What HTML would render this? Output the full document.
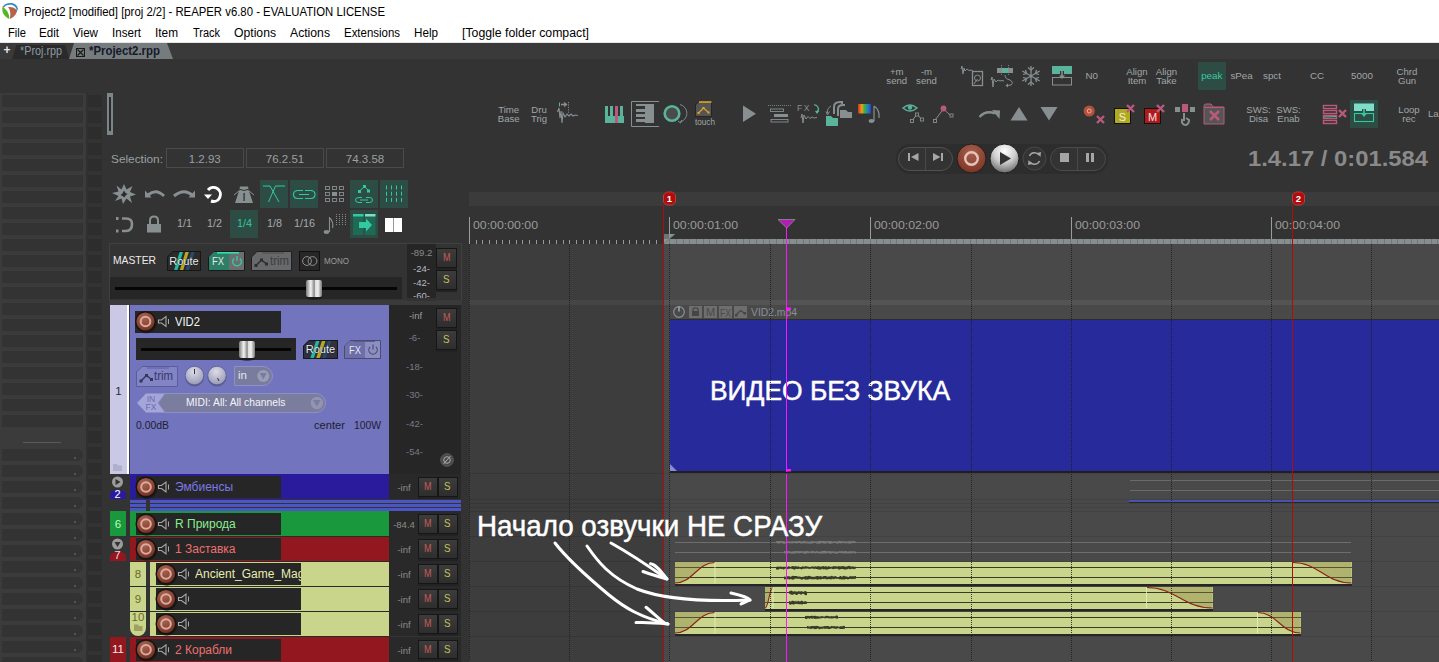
<!DOCTYPE html>
<html><head><meta charset="utf-8"><style>
html,body{margin:0;padding:0;}
body{width:1439px;height:662px;position:relative;overflow:hidden;background:#333333;font-family:"Liberation Sans", sans-serif;}
svg{position:absolute;overflow:visible;}
</style></head><body>
<div style="position:absolute;left:0px;top:0px;width:1439px;height:43px;background:#ffffff;"></div>
<svg style="left:0;top:0" width="20" height="20">
<path d="M2.4,7.6 C1.6,12.5 4.2,16.8 9.2,18.9 C9.6,14.8 7.5,10 3.2,7.2 Z" fill="#57b52c"/>
<path d="M8,7 C11.5,6.5 15,7.6 17.2,10.2 C16.6,14.2 13.6,17.6 9.8,18.9 C10.8,14.8 10.6,10 8,7 Z" fill="#b8624e"/>
<path d="M2.6,7 C4.5,3.2 11,1.8 15.5,4.5 C17.4,5.8 18,8 17.8,10.3 L16.6,10 C16.4,6.8 13.2,4.8 10,4.8 C6.8,4.8 4.8,6 3.9,7.6 Z" fill="#2a8fcf"/>
<path d="M2.4,6.9 L3.9,7.7 L4.6,6.6 L3.3,6 Z" fill="#c87a20"/>
</svg>
<div style="position:absolute;left:23.50px;top:5.54px;font-size:12px;line-height:12px;color:#000;font-weight:normal;white-space:nowrap;transform:scaleX(0.9458);transform-origin:0 0;">Project2 [modified] [proj 2/2] - REAPER v6.80 - EVALUATION LICENSE</div>
<div style="position:absolute;left:7.50px;top:26.64px;font-size:12px;line-height:12px;color:#000;font-weight:normal;white-space:nowrap;transform:scaleX(0.9309);transform-origin:0 0;">File</div>
<div style="position:absolute;left:39.00px;top:26.64px;font-size:12px;line-height:12px;color:#000;font-weight:normal;white-space:nowrap;transform:scaleX(0.9672);transform-origin:0 0;">Edit</div>
<div style="position:absolute;left:73.00px;top:26.64px;font-size:12px;line-height:12px;color:#000;font-weight:normal;white-space:nowrap;transform:scaleX(0.9693);transform-origin:0 0;">View</div>
<div style="position:absolute;left:112.00px;top:26.64px;font-size:12px;line-height:12px;color:#000;font-weight:normal;white-space:nowrap;transform:scaleX(0.9663);transform-origin:0 0;">Insert</div>
<div style="position:absolute;left:155.00px;top:26.64px;font-size:12px;line-height:12px;color:#000;font-weight:normal;white-space:nowrap;transform:scaleX(0.9855);transform-origin:0 0;">Item</div>
<div style="position:absolute;left:193.00px;top:26.64px;font-size:12px;line-height:12px;color:#000;font-weight:normal;white-space:nowrap;transform:scaleX(0.9136);transform-origin:0 0;">Track</div>
<div style="position:absolute;left:234.00px;top:26.64px;font-size:12px;line-height:12px;color:#000;font-weight:normal;white-space:nowrap;transform:scaleX(1.0156);transform-origin:0 0;">Options</div>
<div style="position:absolute;left:290.00px;top:26.64px;font-size:12px;line-height:12px;color:#000;font-weight:normal;white-space:nowrap;transform:scaleX(1.0165);transform-origin:0 0;">Actions</div>
<div style="position:absolute;left:344.00px;top:26.64px;font-size:12px;line-height:12px;color:#000;font-weight:normal;white-space:nowrap;transform:scaleX(0.9540);transform-origin:0 0;">Extensions</div>
<div style="position:absolute;left:414.00px;top:26.64px;font-size:12px;line-height:12px;color:#000;font-weight:normal;white-space:nowrap;transform:scaleX(0.9725);transform-origin:0 0;">Help</div>
<div style="position:absolute;left:462.00px;top:26.64px;font-size:12px;line-height:12px;color:#000;font-weight:normal;white-space:nowrap;transform:scaleX(1.0236);transform-origin:0 0;">[Toggle folder compact]</div>
<div style="position:absolute;left:0px;top:42px;width:1439px;height:1px;background:#e6e6e6;"></div>
<div style="position:absolute;left:0px;top:43px;width:1439px;height:16px;background:#3a3a3a;"></div>
<div style="position:absolute;left:3.50px;top:43.84px;font-size:12px;line-height:12px;color:#e8e8e8;font-weight:bold;white-space:nowrap;">+</div>
<svg style="left:0;top:43px" width="200" height="16"><polygon points="12,16 16.5,2 65,2 69.5,16" fill="#2a2a2a"/><polygon points="69,16 74,0 167,0 173,16" fill="#767c7e"/></svg>
<div style="position:absolute;left:19.50px;top:44.84px;font-size:12px;line-height:12px;color:#8c9aa6;font-weight:normal;white-space:nowrap;transform:scaleX(0.8996);transform-origin:0 0;">*Proj.rpp</div>
<div style="position:absolute;left:76px;top:48px;width:9px;height:9px;background:transparent;border:1px solid #1a1a1a;box-sizing:border-box;"></div>
<svg style="left:76px;top:48px" width="9" height="9"><path d="M1.5,1.5 L7.5,7.5 M7.5,1.5 L1.5,7.5" stroke="#1a1a1a" stroke-width="1.2"/></svg>
<div style="position:absolute;left:89.00px;top:45.14px;font-size:12px;line-height:12px;color:#15182a;font-weight:bold;white-space:nowrap;transform:scaleX(0.9506);transform-origin:0 0;">*Project2.rpp</div>
<div style="position:absolute;left:0px;top:93px;width:86px;height:569px;background:#3b3b3b;"></div>
<div style="position:absolute;left:2px;top:95px;width:81px;height:12px;background:#333333;"></div>
<div style="position:absolute;left:2px;top:111px;width:81px;height:12px;background:#333333;"></div>
<div style="position:absolute;left:2px;top:127px;width:81px;height:12px;background:#333333;"></div>
<div style="position:absolute;left:2px;top:143px;width:81px;height:12px;background:#333333;"></div>
<div style="position:absolute;left:2px;top:159px;width:81px;height:12px;background:#333333;"></div>
<div style="position:absolute;left:2px;top:175px;width:81px;height:12px;background:#333333;"></div>
<div style="position:absolute;left:2px;top:191px;width:81px;height:12px;background:#333333;"></div>
<div style="position:absolute;left:2px;top:207px;width:81px;height:12px;background:#333333;"></div>
<div style="position:absolute;left:2px;top:223px;width:81px;height:12px;background:#333333;"></div>
<div style="position:absolute;left:2px;top:239px;width:81px;height:12px;background:#333333;"></div>
<div style="position:absolute;left:2px;top:255px;width:81px;height:12px;background:#333333;"></div>
<div style="position:absolute;left:2px;top:271px;width:81px;height:12px;background:#333333;"></div>
<div style="position:absolute;left:2px;top:287px;width:81px;height:12px;background:#333333;"></div>
<div style="position:absolute;left:2px;top:303px;width:81px;height:12px;background:#333333;"></div>
<div style="position:absolute;left:2px;top:319px;width:81px;height:12px;background:#333333;"></div>
<div style="position:absolute;left:2px;top:335px;width:81px;height:12px;background:#333333;"></div>
<div style="position:absolute;left:2px;top:351px;width:81px;height:12px;background:#333333;"></div>
<div style="position:absolute;left:2px;top:367px;width:81px;height:12px;background:#333333;"></div>
<div style="position:absolute;left:2px;top:383px;width:81px;height:12px;background:#333333;"></div>
<div style="position:absolute;left:2px;top:399px;width:81px;height:12px;background:#333333;"></div>
<div style="position:absolute;left:2px;top:415px;width:81px;height:12px;background:#333333;"></div>
<div style="position:absolute;left:23px;top:442px;width:38px;height:1px;background:#5a5a5a;"></div>
<div style="position:absolute;left:2px;top:449px;width:81px;height:12px;background:#333333;border-radius:0 7px 7px 0;"></div>
<div style="position:absolute;left:74px;top:457px;width:2px;height:2px;background:#555;"></div>
<div style="position:absolute;left:2px;top:465px;width:81px;height:12px;background:#333333;border-radius:0 7px 7px 0;"></div>
<div style="position:absolute;left:74px;top:473px;width:2px;height:2px;background:#555;"></div>
<div style="position:absolute;left:2px;top:481px;width:81px;height:12px;background:#333333;border-radius:0 7px 7px 0;"></div>
<div style="position:absolute;left:74px;top:489px;width:2px;height:2px;background:#555;"></div>
<div style="position:absolute;left:2px;top:497px;width:81px;height:12px;background:#333333;border-radius:0 7px 7px 0;"></div>
<div style="position:absolute;left:74px;top:505px;width:2px;height:2px;background:#555;"></div>
<div style="position:absolute;left:2px;top:513px;width:81px;height:12px;background:#333333;border-radius:0 7px 7px 0;"></div>
<div style="position:absolute;left:74px;top:521px;width:2px;height:2px;background:#555;"></div>
<div style="position:absolute;left:2px;top:529px;width:81px;height:12px;background:#333333;border-radius:0 7px 7px 0;"></div>
<div style="position:absolute;left:74px;top:537px;width:2px;height:2px;background:#555;"></div>
<div style="position:absolute;left:2px;top:545px;width:81px;height:12px;background:#333333;border-radius:0 7px 7px 0;"></div>
<div style="position:absolute;left:74px;top:553px;width:2px;height:2px;background:#555;"></div>
<div style="position:absolute;left:2px;top:561px;width:81px;height:12px;background:#333333;border-radius:0 7px 7px 0;"></div>
<div style="position:absolute;left:74px;top:569px;width:2px;height:2px;background:#555;"></div>
<div style="position:absolute;left:2px;top:577px;width:81px;height:12px;background:#333333;border-radius:0 7px 7px 0;"></div>
<div style="position:absolute;left:74px;top:585px;width:2px;height:2px;background:#555;"></div>
<div style="position:absolute;left:2px;top:593px;width:81px;height:12px;background:#333333;border-radius:0 7px 7px 0;"></div>
<div style="position:absolute;left:74px;top:601px;width:2px;height:2px;background:#555;"></div>
<div style="position:absolute;left:2px;top:609px;width:81px;height:12px;background:#333333;border-radius:0 7px 7px 0;"></div>
<div style="position:absolute;left:74px;top:617px;width:2px;height:2px;background:#555;"></div>
<div style="position:absolute;left:2px;top:625px;width:81px;height:12px;background:#333333;border-radius:0 7px 7px 0;"></div>
<div style="position:absolute;left:74px;top:633px;width:2px;height:2px;background:#555;"></div>
<div style="position:absolute;left:2px;top:641px;width:81px;height:12px;background:#333333;border-radius:0 7px 7px 0;"></div>
<div style="position:absolute;left:74px;top:649px;width:2px;height:2px;background:#555;"></div>
<div style="position:absolute;left:2px;top:657px;width:81px;height:12px;background:#333333;border-radius:0 7px 7px 0;"></div>
<div style="position:absolute;left:74px;top:665px;width:2px;height:2px;background:#555;"></div>
<div style="position:absolute;left:86px;top:93px;width:2px;height:569px;background:#303030;"></div>
<div style="position:absolute;left:88px;top:95px;width:14px;height:12px;background:#2d2d2d;"></div>
<div style="position:absolute;left:88px;top:111px;width:14px;height:12px;background:#2d2d2d;"></div>
<div style="position:absolute;left:88px;top:127px;width:14px;height:12px;background:#2d2d2d;"></div>
<div style="position:absolute;left:88px;top:143px;width:14px;height:12px;background:#2d2d2d;"></div>
<div style="position:absolute;left:88px;top:159px;width:14px;height:12px;background:#2d2d2d;"></div>
<div style="position:absolute;left:88px;top:175px;width:14px;height:12px;background:#2d2d2d;"></div>
<div style="position:absolute;left:88px;top:191px;width:14px;height:12px;background:#2d2d2d;"></div>
<div style="position:absolute;left:88px;top:207px;width:14px;height:12px;background:#2d2d2d;"></div>
<div style="position:absolute;left:88px;top:223px;width:14px;height:12px;background:#2d2d2d;"></div>
<div style="position:absolute;left:88px;top:239px;width:14px;height:12px;background:#2d2d2d;"></div>
<div style="position:absolute;left:88px;top:255px;width:14px;height:12px;background:#2d2d2d;"></div>
<div style="position:absolute;left:88px;top:271px;width:14px;height:12px;background:#2d2d2d;"></div>
<div style="position:absolute;left:88px;top:287px;width:14px;height:12px;background:#2d2d2d;"></div>
<div style="position:absolute;left:88px;top:303px;width:14px;height:12px;background:#2d2d2d;"></div>
<div style="position:absolute;left:88px;top:319px;width:14px;height:12px;background:#2d2d2d;"></div>
<div style="position:absolute;left:88px;top:335px;width:14px;height:12px;background:#2d2d2d;"></div>
<div style="position:absolute;left:88px;top:351px;width:14px;height:12px;background:#2d2d2d;"></div>
<div style="position:absolute;left:88px;top:367px;width:14px;height:12px;background:#2d2d2d;"></div>
<div style="position:absolute;left:88px;top:383px;width:14px;height:12px;background:#2d2d2d;"></div>
<div style="position:absolute;left:88px;top:399px;width:14px;height:12px;background:#2d2d2d;"></div>
<div style="position:absolute;left:88px;top:415px;width:14px;height:12px;background:#2d2d2d;"></div>
<div style="position:absolute;left:88px;top:431px;width:14px;height:12px;background:#2d2d2d;"></div>
<div style="position:absolute;left:88px;top:447px;width:14px;height:12px;background:#2d2d2d;"></div>
<div style="position:absolute;left:88px;top:463px;width:14px;height:12px;background:#2d2d2d;"></div>
<div style="position:absolute;left:88px;top:479px;width:14px;height:12px;background:#2d2d2d;"></div>
<div style="position:absolute;left:88px;top:495px;width:14px;height:12px;background:#2d2d2d;"></div>
<div style="position:absolute;left:88px;top:511px;width:14px;height:12px;background:#2d2d2d;"></div>
<div style="position:absolute;left:88px;top:527px;width:14px;height:12px;background:#2d2d2d;"></div>
<div style="position:absolute;left:88px;top:543px;width:14px;height:12px;background:#2d2d2d;"></div>
<div style="position:absolute;left:88px;top:559px;width:14px;height:12px;background:#2d2d2d;"></div>
<div style="position:absolute;left:88px;top:575px;width:14px;height:12px;background:#2d2d2d;"></div>
<div style="position:absolute;left:88px;top:591px;width:14px;height:12px;background:#2d2d2d;"></div>
<div style="position:absolute;left:88px;top:607px;width:14px;height:12px;background:#2d2d2d;"></div>
<div style="position:absolute;left:88px;top:623px;width:14px;height:12px;background:#2d2d2d;"></div>
<div style="position:absolute;left:88px;top:639px;width:14px;height:12px;background:#2d2d2d;"></div>
<div style="position:absolute;left:88px;top:655px;width:14px;height:12px;background:#2d2d2d;"></div>
<div style="position:absolute;left:107px;top:93px;width:6px;height:42px;background:#7c8587;"></div>
<div style="position:absolute;left:109px;top:97px;width:2px;height:34px;background:#2a2a2a;"></div>
<div style="position:absolute;left:889.95px;top:67.37px;font-size:9.6px;line-height:9.6px;color:#a0a6a8;font-weight:normal;white-space:nowrap;">+m</div>
<div style="position:absolute;left:886.35px;top:75.87px;font-size:9.6px;line-height:9.6px;color:#a0a6a8;font-weight:normal;white-space:nowrap;">send</div>
<div style="position:absolute;left:920.91px;top:67.37px;font-size:9.6px;line-height:9.6px;color:#a0a6a8;font-weight:normal;white-space:nowrap;">-m</div>
<div style="position:absolute;left:916.10px;top:75.87px;font-size:9.6px;line-height:9.6px;color:#a0a6a8;font-weight:normal;white-space:nowrap;">send</div>
<div style="position:absolute;left:1085.44px;top:71.20px;font-size:9.8px;line-height:9.8px;color:#a0a6a8;font-weight:normal;white-space:nowrap;">N0</div>
<div style="position:absolute;left:1126.33px;top:67.37px;font-size:9.6px;line-height:9.6px;color:#a0a6a8;font-weight:normal;white-space:nowrap;">Align</div>
<div style="position:absolute;left:1127.67px;top:75.87px;font-size:9.6px;line-height:9.6px;color:#a0a6a8;font-weight:normal;white-space:nowrap;">Item</div>
<div style="position:absolute;left:1155.83px;top:67.37px;font-size:9.6px;line-height:9.6px;color:#a0a6a8;font-weight:normal;white-space:nowrap;">Align</div>
<div style="position:absolute;left:1156.37px;top:75.87px;font-size:9.6px;line-height:9.6px;color:#a0a6a8;font-weight:normal;white-space:nowrap;">Take</div>
<div style="position:absolute;left:1198px;top:62px;width:28px;height:28px;background:#2d4c44;"></div>
<div style="position:absolute;left:1201.18px;top:71.20px;font-size:9.8px;line-height:9.8px;color:#3cc8a0;font-weight:normal;white-space:nowrap;">peak</div>
<div style="position:absolute;left:1230.43px;top:71.20px;font-size:9.8px;line-height:9.8px;color:#a0a6a8;font-weight:normal;white-space:nowrap;">sPea</div>
<div style="position:absolute;left:1263.02px;top:71.20px;font-size:9.8px;line-height:9.8px;color:#a0a6a8;font-weight:normal;white-space:nowrap;">spct</div>
<div style="position:absolute;left:1309.93px;top:71.20px;font-size:9.8px;line-height:9.8px;color:#a0a6a8;font-weight:normal;white-space:nowrap;">CC</div>
<div style="position:absolute;left:1351.10px;top:71.20px;font-size:9.8px;line-height:9.8px;color:#a0a6a8;font-weight:normal;white-space:nowrap;">5000</div>
<div style="position:absolute;left:1396.60px;top:67.37px;font-size:9.6px;line-height:9.6px;color:#a0a6a8;font-weight:normal;white-space:nowrap;">Chrd</div>
<div style="position:absolute;left:1397.93px;top:75.87px;font-size:9.6px;line-height:9.6px;color:#a0a6a8;font-weight:normal;white-space:nowrap;">Gun</div>
<div style="position:absolute;left:498.22px;top:105.37px;font-size:9.6px;line-height:9.6px;color:#a0a6a8;font-weight:normal;white-space:nowrap;">Time</div>
<div style="position:absolute;left:497.77px;top:113.87px;font-size:9.6px;line-height:9.6px;color:#a0a6a8;font-weight:normal;white-space:nowrap;">Base</div>
<div style="position:absolute;left:531.27px;top:105.37px;font-size:9.6px;line-height:9.6px;color:#a0a6a8;font-weight:normal;white-space:nowrap;">Dru</div>
<div style="position:absolute;left:530.92px;top:113.87px;font-size:9.6px;line-height:9.6px;color:#a0a6a8;font-weight:normal;white-space:nowrap;">Trig</div>
<div style="position:absolute;left:1246.24px;top:105.37px;font-size:9.6px;line-height:9.6px;color:#a0a6a8;font-weight:normal;white-space:nowrap;">SWS:</div>
<div style="position:absolute;left:1248.90px;top:113.87px;font-size:9.6px;line-height:9.6px;color:#a0a6a8;font-weight:normal;white-space:nowrap;">Disa</div>
<div style="position:absolute;left:1276.24px;top:105.37px;font-size:9.6px;line-height:9.6px;color:#a0a6a8;font-weight:normal;white-space:nowrap;">SWS:</div>
<div style="position:absolute;left:1277.30px;top:113.87px;font-size:9.6px;line-height:9.6px;color:#a0a6a8;font-weight:normal;white-space:nowrap;">Enab</div>
<div style="position:absolute;left:1398.33px;top:105.37px;font-size:9.6px;line-height:9.6px;color:#a0a6a8;font-weight:normal;white-space:nowrap;">Loop</div>
<div style="position:absolute;left:1402.34px;top:113.87px;font-size:9.6px;line-height:9.6px;color:#a0a6a8;font-weight:normal;white-space:nowrap;">rec</div>
<div style="position:absolute;left:1428.00px;top:109.37px;font-size:9.6px;line-height:9.6px;color:#a0a6a8;font-weight:normal;white-space:nowrap;">La</div>
<div style="position:absolute;left:1350px;top:100px;width:28px;height:28px;background:#2d4c44;"></div>
<div style="position:absolute;left:695.00px;top:117.37px;font-size:9.6px;line-height:9.6px;color:#a0a6a8;font-weight:normal;white-space:nowrap;transform:scaleX(0.8522);transform-origin:0 0;">touch</div>
<svg style="left:0;top:0" width="1439" height="140">
<!-- waveform trim icon -->
<path d="M557.5,112 L559,108 L560,118 L561,111 L562,123 L563,113 L565,117 L567,114 L569,116 L571,114 L573,116 L575,115 L578,115.5" stroke="#878f91" stroke-width="1.1" fill="none"/>
<rect x="559" y="102.5" width="1" height="4" fill="#5ab39b"/>
<path d="M561,104.5 L566,104.5 M564,102.5 L566.5,104.5 L564,106.5" stroke="#878f91" stroke-width="1.3" fill="none"/>
<path d="M568.5,102 L568.5,114" stroke="#878f91" stroke-width="0.9" stroke-dasharray="1.2,1.2"/>
<!-- piano -->
<rect x="605" y="106" width="3" height="17" fill="#5ab39b"/><rect x="610" y="106" width="3" height="17" fill="#5ab39b"/>
<rect x="615" y="106" width="3" height="17" fill="#b95a7c"/><rect x="620" y="106" width="3" height="17" fill="#5ab39b"/>
<rect x="605" y="116" width="5" height="7" fill="#5ab39b"/><rect x="613" y="116" width="2" height="7" fill="#5ab39b"/><rect x="618" y="116" width="6" height="7" fill="#5ab39b"/>
<!-- piano roll -->
<path d="M659,101.5 L631.5,101.5 L631.5,126.5 L659,126.5" stroke="#878f91" stroke-width="1" fill="none"/>
<rect x="636" y="104" width="18" height="2" fill="#878f91"/><rect x="646" y="104" width="8" height="3" fill="#878f91"/>
<rect x="636" y="109" width="18" height="3" fill="#878f91"/><rect x="636" y="114" width="18" height="3" fill="#878f91"/><rect x="636" y="119" width="18" height="3" fill="#878f91"/>
<rect x="645" y="106" width="9" height="17" fill="#878f91"/>
<rect x="636" y="107" width="9" height="1.5" fill="#333"/><rect x="636" y="112.5" width="9" height="1.5" fill="#333"/><rect x="636" y="117.5" width="9" height="1.5" fill="#333"/>
<!-- loop -->
<circle cx="672" cy="113.5" r="7.3" stroke="#5ab39b" stroke-width="2.6" fill="#4a4c4c"/>
<path d="M680,104.5 A9,9 0 0 1 680,122" stroke="#878f91" stroke-width="0.9" fill="none"/><path d="M678,121 L680.5,123 L682,120" stroke="#878f91" stroke-width="1" fill="none"/>
<!-- touch -->
<path d="M699,101.5 L711.5,101.5 L711.5,116.5 L695.5,116.5 L695.5,105 Z" fill="#555" stroke="#1e1e1e" stroke-width="0.8"/>
<path d="M699,102 L711.5,102" stroke="#e2a520" stroke-width="1.6"/>
<path d="M698.5,113 L703.5,108 L708.5,112.5" stroke="#e2a520" stroke-width="1.1" fill="none"/>
<rect x="697.5" y="112" width="2" height="2" fill="#e2a520"/><rect x="702.5" y="107" width="2" height="2" fill="#e2a520"/><rect x="707.5" y="111.5" width="2" height="2" fill="#e2a520"/>
<!-- play -->
<path d="M743,105.5 L756,113.7 L743,122 Z" fill="#878f91"/>
<!-- align lines -->
<path d="M768,105.5 L791,105.5" stroke="#878f91" stroke-width="0.8" stroke-dasharray="1,1"/>
<rect x="770.5" y="109" width="13" height="2.5" stroke="#878f91" stroke-width="0.9" fill="none"/>
<rect x="774" y="114" width="14" height="3" fill="#878f91"/>
<rect x="771" y="119.5" width="17" height="2.5" stroke="#878f91" stroke-width="0.9" fill="none"/>
<!-- FX wave -->
<text x="797" y="111" font-size="8.5" fill="#878f91" font-family="Liberation Sans" letter-spacing="1.5">FX</text>
<path d="M814,105 A4,4 0 0 1 817,112" stroke="#5ab39b" stroke-width="1.2" fill="none"/><path d="M815,111 L817,114 L819.5,110.5 Z" fill="#5ab39b"/>
<path d="M801,118 L802,114 L803,123 L804,115 L806,119 L808,116.5 L810,118.5 L812,117 L814,118 L817,117.5" stroke="#878f91" stroke-width="1" fill="none"/>
<!-- folders -->
<path d="M834,114 L834,107 Q834,102 840,102 L842,102 L842,104" stroke="#878f91" stroke-width="2" fill="none"/>
<path d="M838,116 L838,109 Q838,105 843,105 L845,105" stroke="#878f91" stroke-width="2" fill="none"/>
<path d="M840,118 L840,110 L846,110 L848,112 L852,112 L852,118 Z" fill="#878f91"/>
<path d="M831,106 Q827,108 827.5,113" stroke="#878f91" stroke-width="1" fill="none"/><path d="M826,111.5 L827.5,115 L829.5,111.5" stroke="#878f91" stroke-width="1" fill="none"/>
<path d="M826,126 L826,116 L831,116 L833,118 L838,118 L838,126 Z" fill="#5ab39b"/>
<!-- color bar + note -->
<defs><linearGradient id="rb" x1="0" x2="1" y1="0" y2="0"><stop offset="0" stop-color="#d03020"/><stop offset="0.3" stop-color="#e8a020"/><stop offset="0.5" stop-color="#40b030"/><stop offset="0.75" stop-color="#2080d0"/><stop offset="1" stop-color="#3040b0"/></linearGradient></defs>
<rect x="858" y="104" width="13" height="9.5" fill="url(#rb)"/>
<path d="M874,106 L874,121 M874,106 Q880,110 879,118" stroke="#878f91" stroke-width="1.2" fill="none"/><ellipse cx="871.5" cy="121" rx="2.8" ry="1.9" fill="#878f91"/>
<!-- eye nodes -->
<path d="M903,108 Q910,102 917,108 Q910,114 903,108 Z" stroke="#5ab39b" stroke-width="1.4" fill="none"/><circle cx="910" cy="107.5" r="2.2" fill="#5ab39b"/>
<path d="M912,121 L917,114 L922,120" stroke="#878f91" stroke-width="1" fill="none"/>
<rect x="910.5" y="119.5" width="3" height="3" stroke="#878f91" stroke-width="0.9" fill="#333"/><rect x="915.5" y="113" width="3" height="3" stroke="#878f91" stroke-width="0.9" fill="#333"/><rect x="920.5" y="118" width="3" height="3" stroke="#878f91" stroke-width="0.9" fill="#333"/>
<!-- envelope pink -->
<path d="M935,120 L943.5,109 L950,115" stroke="#878f91" stroke-width="1" fill="none"/>
<circle cx="943.5" cy="108.5" r="2.9" fill="#b95a7c"/>
<rect x="933.5" y="119.5" width="3" height="3" stroke="#878f91" stroke-width="0.9" fill="#333"/><rect x="950" y="114" width="3" height="3" stroke="#878f91" stroke-width="0.9" fill="#333"/>
<!-- row1: disk -->
<path d="M961,69 L962,66 L963,74 L964,68 L965,71 L967,69 L969,70.5 L971,70 L973,71" stroke="#878f91" stroke-width="1" fill="none"/>
<rect x="972.5" y="71.5" width="10" height="14" fill="none" stroke="#878f91" stroke-width="1.3"/>
<circle cx="977.5" cy="78" r="3" stroke="#878f91" stroke-width="1" fill="none"/><path d="M974,84 L977.5,79" stroke="#878f91" stroke-width="1"/>
<!-- selection wave -->
<rect x="997" y="68" width="16" height="5" fill="#878f91"/><rect x="1002" y="68" width="6" height="5" fill="#5ab39b"/>
<path d="M1001.5,65 L1001.5,76 M1008.5,65 L1008.5,76" stroke="#878f91" stroke-width="0.8" stroke-dasharray="1.2,1"/>
<path d="M991,80 L992,77 L993,87 L994,79 L996,82 L998,80 L1000,81 L1002,80.5 L1004,81" stroke="#878f91" stroke-width="1" fill="none"/>
<path d="M1005,75 Q1005,79 1010,80 Q1014,82 1011,85 L1007,85.5" stroke="#878f91" stroke-width="1" fill="none"/><path d="M1008,83.5 L1005.5,85.5 L1008,87.5 Z" fill="#878f91"/>
<!-- snowflake -->
<g stroke="#878f91" stroke-width="1.3" fill="none">
<path d="M1031,66 L1031,86 M1022.3,71 L1039.7,81 M1022.3,81 L1039.7,71"/>
<path d="M1028,67.5 L1031,70 L1034,67.5 M1028,84.5 L1031,82 L1034,84.5 M1023,74.5 L1026.5,73.5 L1025.5,70 M1039,74.5 L1035.5,73.5 L1036.5,70 M1023,77.5 L1026.5,78.5 L1025.5,82 M1039,77.5 L1035.5,78.5 L1036.5,82"/>
</g>
<!-- import -->
<path d="M1052,66 L1072,66 L1072,74 L1064,74 L1064,71 L1060,71 L1060,74 L1052,74 Z" fill="#5ab39b"/>
<rect x="1052.5" y="77.5" width="19" height="7.5" fill="none" stroke="#878f91" stroke-width="1"/>
<path d="M1062,71 L1062,77" stroke="#878f91" stroke-width="1.6"/><path d="M1059,75.5 L1062,79 L1065,75.5 Z" fill="#878f91"/>
<!-- redo -->
<path d="M979.5,117 Q986,110 995,113.5" stroke="#878f91" stroke-width="2.4" fill="none"/><path d="M992,110 L1000,110.5 L999.5,119 Z" fill="#878f91"/>
<!-- up/down -->
<path d="M1010.5,120.5 L1019,107 L1027.5,120.5 Z" fill="#878f91"/>
<path d="M1040.5,107 L1057.5,107 L1049,120.5 Z" fill="#878f91"/>
<!-- rec x -->
<circle cx="1089.2" cy="111" r="5.6" fill="#b5503a"/><circle cx="1089.2" cy="111" r="2" stroke="#e8c0b0" stroke-width="0.9" fill="none"/>
<path d="M1097,116 L1104,123 M1104,116 L1097,123" stroke="#b95a7c" stroke-width="2.4"/>
<!-- S x -->
<rect x="1114.5" y="108.5" width="16" height="15" fill="#b3aa1e" stroke="#111" stroke-width="1"/>
<text x="1122.5" y="120.5" font-size="11" fill="#f0f0e0" font-family="Liberation Sans" text-anchor="middle">S</text>
<path d="M1127,105 L1134,112 M1134,105 L1127,112" stroke="#b95a7c" stroke-width="2.4"/>
<!-- M x -->
<rect x="1144.5" y="108.5" width="16" height="15" fill="#b3191a" stroke="#111" stroke-width="1"/>
<text x="1152.5" y="120.5" font-size="11" fill="#f0e0e0" font-family="Liberation Sans" text-anchor="middle">M</text>
<path d="M1157,105 L1164,112 M1164,105 L1157,112" stroke="#b95a7c" stroke-width="2.4"/>
<!-- hand -->
<rect x="1175" y="107" width="5" height="5" fill="#878f91"/><rect x="1182" y="104" width="6" height="8" fill="#b95a7c"/><rect x="1190" y="107" width="5" height="5" fill="#878f91"/>
<path d="M1184,113 L1184,121 M1182,119 Q1181,125 1186,125 Q1189,124 1189,120 L1186,118" stroke="#878f91" stroke-width="2" fill="none"/>
<!-- folder x -->
<path d="M1204,124 L1204,106 Q1204,104 1206,104 L1211,104 L1213,107 L1224,107 L1224,124 Z" fill="#555" stroke="#b95a7c" stroke-width="1"/>
<path d="M1204.5,107.5 L1223.5,107.5" stroke="#b95a7c" stroke-width="1.2"/>
<path d="M1210,111 L1219,120 M1219,111 L1210,120" stroke="#b95a7c" stroke-width="2.6"/>
<!-- pink lines x -->
<g fill="none" stroke="#b95a7c" stroke-width="1.4"><rect x="1323.5" y="105.5" width="13" height="3"/><rect x="1323.5" y="110.5" width="13" height="3"/><rect x="1323.5" y="115.5" width="13" height="3"/><rect x="1323.5" y="120.5" width="13" height="3"/></g>
<path d="M1324,117 L1336,116.5" stroke="#5ab39b" stroke-width="1"/>
<path d="M1339,110 L1346,117 M1346,110 L1339,117" stroke="#b95a7c" stroke-width="2.4"/>
<!-- import highlighted -->
<path d="M1354,103.5 L1374,103.5 L1374,111 L1366,111 L1366,109 L1362,109 L1362,111 L1354,111 Z" fill="#7fdcc8"/>
<rect x="1354.5" y="113.5" width="19" height="8" fill="none" stroke="#33c9a0" stroke-width="1.1"/>
<path d="M1364,109 L1364,115" stroke="#33c9a0" stroke-width="1.6"/><path d="M1361,113.5 L1364,117 L1367,113.5 Z" fill="#33c9a0"/>
</svg>
<div style="position:absolute;left:111.00px;top:154.27px;font-size:11.5px;line-height:11.5px;color:#9aa0a4;font-weight:normal;white-space:nowrap;transform:scaleX(1.0296);transform-origin:0 0;">Selection:</div>
<div style="position:absolute;left:166px;top:148px;width:77.5px;height:19.5px;background:transparent;border:1px solid #4b4b4b;box-sizing:border-box;"></div>
<div style="position:absolute;left:188.76px;top:154.27px;font-size:11.5px;line-height:11.5px;color:#9aa0a4;font-weight:normal;white-space:nowrap;">1.2.93</div>
<div style="position:absolute;left:246px;top:148px;width:78px;height:19.5px;background:transparent;border:1px solid #4b4b4b;box-sizing:border-box;"></div>
<div style="position:absolute;left:265.82px;top:154.27px;font-size:11.5px;line-height:11.5px;color:#9aa0a4;font-weight:normal;white-space:nowrap;">76.2.51</div>
<div style="position:absolute;left:326px;top:148px;width:78px;height:19.5px;background:transparent;border:1px solid #4b4b4b;box-sizing:border-box;"></div>
<div style="position:absolute;left:345.82px;top:154.27px;font-size:11.5px;line-height:11.5px;color:#9aa0a4;font-weight:normal;white-space:nowrap;">74.3.58</div>
<div style="position:absolute;left:260px;top:180px;width:28px;height:28px;background:#2d4c44;"></div>
<div style="position:absolute;left:290px;top:180px;width:28px;height:28px;background:#2d4c44;"></div>
<div style="position:absolute;left:350px;top:180px;width:28px;height:28px;background:#2d4c44;"></div>
<div style="position:absolute;left:380px;top:180px;width:28px;height:28px;background:#2d4c44;"></div>
<div style="position:absolute;left:230px;top:210px;width:28px;height:28px;background:#2d4c44;"></div>
<div style="position:absolute;left:350px;top:210px;width:28px;height:28px;background:#2d4c44;"></div>
<div style="position:absolute;left:176.70px;top:218.41px;font-size:10.5px;line-height:10.5px;color:#a6abae;font-weight:normal;white-space:nowrap;transform:scaleX(1.0276);transform-origin:0 0;">1/1</div>
<div style="position:absolute;left:206.80px;top:218.41px;font-size:10.5px;line-height:10.5px;color:#a6abae;font-weight:normal;white-space:nowrap;transform:scaleX(1.0276);transform-origin:0 0;">1/2</div>
<div style="position:absolute;left:236.80px;top:218.41px;font-size:10.5px;line-height:10.5px;color:#33c9a0;font-weight:normal;white-space:nowrap;transform:scaleX(1.0276);transform-origin:0 0;">1/4</div>
<div style="position:absolute;left:266.80px;top:218.41px;font-size:10.5px;line-height:10.5px;color:#a6abae;font-weight:normal;white-space:nowrap;transform:scaleX(1.0276);transform-origin:0 0;">1/8</div>
<div style="position:absolute;left:293.80px;top:218.41px;font-size:10.5px;line-height:10.5px;color:#a6abae;font-weight:normal;white-space:nowrap;transform:scaleX(1.0276);transform-origin:0 0;">1/16</div>
<svg style="left:0;top:0" width="440" height="245">
<!-- star -->
<path d="M124,184 L126.5,189.5 L132.5,186 L130,192 L136,194.5 L130,196.5 L132,203 L126.5,198.5 L123,204 L121.5,198.5 L115,201 L118.5,196 L112,193 L118.5,191.5 L116.5,185.5 L121.5,189.5 Z" fill="#878f91"/>
<path d="M124,190.5 L125.5,193 L127.5,194 L125.5,195.5 L124.5,197.5 L122.5,196 L120.5,195 L122.5,193.5 Z" fill="#2a2a2a"/>
<!-- undo -->
<path d="M145,197.5 L145,190.5 L151.5,197.5 Z" fill="#878f91"/>
<path d="M148,195 Q156,188 164,196" stroke="#878f91" stroke-width="3" fill="none"/>
<!-- redo -->
<path d="M195,197.5 L195,190.5 L188.5,197.5 Z" fill="#878f91"/>
<path d="M192,195 Q184,188 174,196" stroke="#878f91" stroke-width="3" fill="none"/>
<!-- refresh -->
<path d="M208,190 A7,7 0 1 1 211,201" stroke="#ffffff" stroke-width="3" fill="none"/>
<path d="M204,194.5 L212,194.5 L208,199 Z" fill="#ffffff"/>
<!-- road -->
<path d="M234,195 Q244,184 254,195" stroke="#878f91" stroke-width="1" fill="none"/>
<path d="M240,186.5 L248,186.5 L248.5,189 L239.5,189 Z" fill="#878f91"/>
<path d="M239,191 L249,191 L253,203 L235,203 Z" fill="#878f91"/>
<rect x="243.5" y="193" width="1.2" height="8" fill="#2a2a2a"/>
<!-- crossfade -->
<path d="M263,186 L270,186 L279,202 M285,186 L275.5,186 L268.5,202" stroke="#33c9a0" stroke-width="1" fill="none"/>
<!-- link -->
<path d="M303,190.5 L298,190.5 Q293.5,190.5 293.5,194.5 Q293.5,198.5 298,198.5 L303,198.5 M305,190.5 L310.5,190.5 Q315,190.5 315,194.5 Q315,198.5 310.5,198.5 L305,198.5 M299,194.5 L309,194.5" stroke="#33c9a0" stroke-width="1.1" fill="none"/>
<!-- grid -->
<g stroke="#878f91" stroke-width="0.9" fill="none">
<rect x="325.5" y="186.5" width="4" height="3"/><rect x="332.5" y="186.5" width="4" height="3"/><rect x="339.5" y="186.5" width="4" height="3"/>
<rect x="325.5" y="192.5" width="4" height="3"/><rect x="339.5" y="192.5" width="4" height="3"/>
<rect x="325.5" y="198.5" width="4" height="3"/><rect x="332.5" y="198.5" width="4" height="3"/><rect x="339.5" y="198.5" width="4" height="3"/>
</g><rect x="332" y="192" width="5" height="4" fill="#878f91"/>
<!-- link env -->
<path d="M359.5,191 L364.5,186.5 L368.5,190.5" stroke="#33c9a0" stroke-width="1" fill="none"/>
<rect x="358" y="190" width="3" height="3" fill="#33c9a0"/><rect x="363" y="185" width="3" height="3" fill="#33c9a0"/><rect x="367" y="189.5" width="3" height="3" fill="#33c9a0"/>
<path d="M362,197.5 L359,197.5 Q355.5,197.5 355.5,200 Q355.5,202.5 359,202.5 L362,202.5 M366,197.5 L369.5,197.5 Q372.5,197.5 372.5,200 Q372.5,202.5 369.5,202.5 L366,202.5 M360,200 L368,200" stroke="#33c9a0" stroke-width="1" fill="none"/>
<!-- grid lines -->
<path d="M386.5,185.5 L386.5,202 M391.5,185.5 L391.5,202 M396.5,185.5 L396.5,202 M401.5,185.5 L401.5,202" stroke="#33c9a0" stroke-width="1" stroke-dasharray="4,2.2"/>
<!-- magnet -->
<path d="M122,218.5 L126,218.5 Q132,218.5 132,224 Q132,231 126,231 L122,231" stroke="#878f91" stroke-width="2.6" fill="none"/>
<rect x="116" y="217" width="2.5" height="3" fill="#878f91"/><rect x="116" y="229.5" width="2.5" height="3" fill="#878f91"/>
<!-- lock -->
<path d="M150,224 L150,220.5 Q150,216.5 154,216.5 Q158,216.5 158,220.5 L158,224" stroke="#878f91" stroke-width="2" fill="none"/>
<rect x="147" y="224" width="14" height="8.5" fill="#878f91"/>
<!-- note -->
<path d="M329.5,217 L329.5,232 M329.5,217.5 Q334,222 332.5,228" stroke="#878f91" stroke-width="1.1" fill="none"/>
<ellipse cx="326.5" cy="232" rx="2.8" ry="1.9" fill="#878f91"/>
<path d="M336.5,214 L336.5,225 M339.5,214 L339.5,225 M342.5,214 L342.5,225 M345.5,214 L345.5,225" stroke="#9aa0a2" stroke-width="0.8" stroke-dasharray="1,1"/>
<!-- arrow box -->
<rect x="353" y="214" width="10.5" height="21" fill="#1f6a55"/><rect x="365" y="214" width="10.5" height="21" fill="#1f6a55"/>
<rect x="353" y="214" width="10.5" height="2.5" fill="#33c9a0"/><rect x="365" y="214" width="10.5" height="2.5" fill="#7fdcc8"/>
<path d="M359,222 L366,222 L366,218.5 L372,225 L366,231.5 L366,228 L359,228 Z" fill="#33c9a0"/>
<!-- white squares -->
<rect x="385" y="218" width="8" height="14" fill="#ffffff"/><rect x="393.5" y="218" width="8.5" height="14" fill="#ffffff"/>
</svg>
<svg style="left:0;top:0" width="1439" height="185">
<defs>
<radialGradient id="recg" cx="0.5" cy="0.3" r="0.7"><stop offset="0" stop-color="#a6604e"/><stop offset="1" stop-color="#7e3424"/></radialGradient>
<radialGradient id="playg" cx="0.5" cy="0.25" r="0.75"><stop offset="0" stop-color="#ffffff"/><stop offset="0.5" stop-color="#cfcfcf"/><stop offset="1" stop-color="#6a6a6a"/></radialGradient>
</defs>
<rect x="896" y="144" width="212" height="30" rx="14" fill="#262626" opacity="0.4"/>
<rect x="898.5" y="147.5" width="54" height="23" rx="11.5" fill="#333" stroke="#505050" stroke-width="1"/>
<path d="M925.5,147.5 L925.5,170.5" stroke="#4a4a4a"/>
<rect x="908" y="153" width="2" height="8" fill="#a6a6a6"/><path d="M918.5,153 L911,157 L918.5,161 Z" fill="#a6a6a6"/>
<path d="M933,153 L940.5,157 L933,161 Z" fill="#a6a6a6"/><rect x="941" y="153" width="2" height="8" fill="#a6a6a6"/>
<circle cx="971.5" cy="158.5" r="14.5" fill="url(#recg)" stroke="#1e1e1e" stroke-width="1"/>
<circle cx="971.5" cy="158.5" r="6.3" fill="none" stroke="#e6c4ba" stroke-width="2.4"/>
<circle cx="1004.5" cy="158.5" r="14.5" fill="url(#playg)" stroke="#1e1e1e" stroke-width="1"/>
<path d="M1000,152 L1011,158.5 L1000,165 Z" fill="#333"/>
<circle cx="1034.5" cy="158.5" r="11.5" fill="#333" stroke="#4a4a4a" stroke-width="1"/>
<path d="M1029.5,156 A5.5,5.5 0 0 1 1039,155 M1039.5,161 A5.5,5.5 0 0 1 1030,162" stroke="#a6a6a6" stroke-width="1.5" fill="none"/>
<path d="M1037,153 L1040.5,157 L1041,152 Z M1032,164 L1028.5,160 L1028,165 Z" fill="#a6a6a6"/>
<rect x="1050.5" y="147.5" width="55" height="23" rx="11.5" fill="#333" stroke="#4a4a4a" stroke-width="1"/>
<path d="M1077.5,147.5 L1077.5,170.5" stroke="#4a4a4a"/>
<rect x="1060" y="153" width="9" height="9" fill="#a6a6a6"/>
<rect x="1086" y="153" width="3" height="9" fill="#a6a6a6"/><rect x="1091" y="153" width="3" height="9" fill="#a6a6a6"/>
</svg>
<div style="position:absolute;left:1248.00px;top:148.18px;font-size:22px;line-height:22px;color:#8a8a8a;font-weight:bold;white-space:nowrap;transform:scaleX(1.0820);transform-origin:0 0;">1.4.17 / 0:01.584</div>
<div style="position:absolute;left:469px;top:192px;width:970px;height:14px;background:#3b3b3b;"></div>
<div style="position:absolute;left:476.0px;top:240px;width:1px;height:4px;background:#9a9a9a;"></div>
<div style="position:absolute;left:482.0px;top:240px;width:1px;height:4px;background:#9a9a9a;"></div>
<div style="position:absolute;left:489.0px;top:240px;width:1px;height:4px;background:#9a9a9a;"></div>
<div style="position:absolute;left:496.0px;top:240px;width:1px;height:4px;background:#9a9a9a;"></div>
<div style="position:absolute;left:502.0px;top:240px;width:1px;height:4px;background:#9a9a9a;"></div>
<div style="position:absolute;left:509.0px;top:240px;width:1px;height:4px;background:#9a9a9a;"></div>
<div style="position:absolute;left:516.0px;top:240px;width:1px;height:4px;background:#9a9a9a;"></div>
<div style="position:absolute;left:522.0px;top:240px;width:1px;height:4px;background:#9a9a9a;"></div>
<div style="position:absolute;left:529.0px;top:240px;width:1px;height:4px;background:#9a9a9a;"></div>
<div style="position:absolute;left:536.0px;top:240px;width:1px;height:4px;background:#9a9a9a;"></div>
<div style="position:absolute;left:543.0px;top:240px;width:1px;height:4px;background:#9a9a9a;"></div>
<div style="position:absolute;left:549.0px;top:240px;width:1px;height:4px;background:#9a9a9a;"></div>
<div style="position:absolute;left:556.0px;top:240px;width:1px;height:4px;background:#9a9a9a;"></div>
<div style="position:absolute;left:563.0px;top:240px;width:1px;height:4px;background:#9a9a9a;"></div>
<div style="position:absolute;left:569.0px;top:240px;width:1px;height:4px;background:#9a9a9a;"></div>
<div style="position:absolute;left:576.0px;top:240px;width:1px;height:4px;background:#9a9a9a;"></div>
<div style="position:absolute;left:583.0px;top:240px;width:1px;height:4px;background:#9a9a9a;"></div>
<div style="position:absolute;left:589.0px;top:240px;width:1px;height:4px;background:#9a9a9a;"></div>
<div style="position:absolute;left:596.0px;top:240px;width:1px;height:4px;background:#9a9a9a;"></div>
<div style="position:absolute;left:603.0px;top:240px;width:1px;height:4px;background:#9a9a9a;"></div>
<div style="position:absolute;left:609.0px;top:240px;width:1px;height:4px;background:#9a9a9a;"></div>
<div style="position:absolute;left:616.0px;top:240px;width:1px;height:4px;background:#9a9a9a;"></div>
<div style="position:absolute;left:623.0px;top:240px;width:1px;height:4px;background:#9a9a9a;"></div>
<div style="position:absolute;left:629.0px;top:240px;width:1px;height:4px;background:#9a9a9a;"></div>
<div style="position:absolute;left:636.0px;top:240px;width:1px;height:4px;background:#9a9a9a;"></div>
<div style="position:absolute;left:643.0px;top:240px;width:1px;height:4px;background:#9a9a9a;"></div>
<div style="position:absolute;left:649.0px;top:240px;width:1px;height:4px;background:#9a9a9a;"></div>
<div style="position:absolute;left:656.0px;top:240px;width:1px;height:4px;background:#9a9a9a;"></div>
<div style="position:absolute;left:469px;top:217px;width:1px;height:27px;background:#9c9c9c;"></div>
<div style="position:absolute;left:473.00px;top:219.66px;font-size:10.8px;line-height:10.8px;color:#9b9b9b;font-weight:normal;white-space:nowrap;transform:scaleX(1.1396);transform-origin:0 0;">00:00:00:00</div>
<div style="position:absolute;left:669px;top:217px;width:1px;height:27px;background:#9c9c9c;"></div>
<div style="position:absolute;left:673.00px;top:219.66px;font-size:10.8px;line-height:10.8px;color:#9b9b9b;font-weight:normal;white-space:nowrap;transform:scaleX(1.1396);transform-origin:0 0;">00:00:01:00</div>
<div style="position:absolute;left:870px;top:217px;width:1px;height:27px;background:#9c9c9c;"></div>
<div style="position:absolute;left:874.00px;top:219.66px;font-size:10.8px;line-height:10.8px;color:#9b9b9b;font-weight:normal;white-space:nowrap;transform:scaleX(1.1396);transform-origin:0 0;">00:00:02:00</div>
<div style="position:absolute;left:1071px;top:217px;width:1px;height:27px;background:#9c9c9c;"></div>
<div style="position:absolute;left:1075.00px;top:219.66px;font-size:10.8px;line-height:10.8px;color:#9b9b9b;font-weight:normal;white-space:nowrap;transform:scaleX(1.1396);transform-origin:0 0;">00:00:03:00</div>
<div style="position:absolute;left:1271px;top:217px;width:1px;height:27px;background:#9c9c9c;"></div>
<div style="position:absolute;left:1275.00px;top:219.66px;font-size:10.8px;line-height:10.8px;color:#9b9b9b;font-weight:normal;white-space:nowrap;transform:scaleX(1.1396);transform-origin:0 0;">00:00:04:00</div>
<div style="position:absolute;left:663px;top:239px;width:776px;height:5px;background:#868e90;"></div>
<div style="position:absolute;left:669px;top:239px;width:1px;height:5px;background:#6f7779;"></div>
<div style="position:absolute;left:676px;top:239px;width:1px;height:5px;background:#6f7779;"></div>
<div style="position:absolute;left:683px;top:239px;width:1px;height:5px;background:#6f7779;"></div>
<div style="position:absolute;left:689px;top:239px;width:1px;height:5px;background:#6f7779;"></div>
<div style="position:absolute;left:696px;top:239px;width:1px;height:5px;background:#6f7779;"></div>
<div style="position:absolute;left:703px;top:239px;width:1px;height:5px;background:#6f7779;"></div>
<div style="position:absolute;left:709px;top:239px;width:1px;height:5px;background:#6f7779;"></div>
<div style="position:absolute;left:716px;top:239px;width:1px;height:5px;background:#6f7779;"></div>
<div style="position:absolute;left:723px;top:239px;width:1px;height:5px;background:#6f7779;"></div>
<div style="position:absolute;left:729px;top:239px;width:1px;height:5px;background:#6f7779;"></div>
<div style="position:absolute;left:736px;top:239px;width:1px;height:5px;background:#6f7779;"></div>
<div style="position:absolute;left:743px;top:239px;width:1px;height:5px;background:#6f7779;"></div>
<div style="position:absolute;left:749px;top:239px;width:1px;height:5px;background:#6f7779;"></div>
<div style="position:absolute;left:756px;top:239px;width:1px;height:5px;background:#6f7779;"></div>
<div style="position:absolute;left:763px;top:239px;width:1px;height:5px;background:#6f7779;"></div>
<div style="position:absolute;left:769px;top:239px;width:1px;height:5px;background:#6f7779;"></div>
<div style="position:absolute;left:776px;top:239px;width:1px;height:5px;background:#6f7779;"></div>
<div style="position:absolute;left:783px;top:239px;width:1px;height:5px;background:#6f7779;"></div>
<div style="position:absolute;left:789px;top:239px;width:1px;height:5px;background:#6f7779;"></div>
<div style="position:absolute;left:796px;top:239px;width:1px;height:5px;background:#6f7779;"></div>
<div style="position:absolute;left:803px;top:239px;width:1px;height:5px;background:#6f7779;"></div>
<div style="position:absolute;left:809px;top:239px;width:1px;height:5px;background:#6f7779;"></div>
<div style="position:absolute;left:816px;top:239px;width:1px;height:5px;background:#6f7779;"></div>
<div style="position:absolute;left:823px;top:239px;width:1px;height:5px;background:#6f7779;"></div>
<div style="position:absolute;left:829px;top:239px;width:1px;height:5px;background:#6f7779;"></div>
<div style="position:absolute;left:836px;top:239px;width:1px;height:5px;background:#6f7779;"></div>
<div style="position:absolute;left:843px;top:239px;width:1px;height:5px;background:#6f7779;"></div>
<div style="position:absolute;left:850px;top:239px;width:1px;height:5px;background:#6f7779;"></div>
<div style="position:absolute;left:856px;top:239px;width:1px;height:5px;background:#6f7779;"></div>
<div style="position:absolute;left:863px;top:239px;width:1px;height:5px;background:#6f7779;"></div>
<div style="position:absolute;left:870px;top:239px;width:1px;height:5px;background:#6f7779;"></div>
<div style="position:absolute;left:876px;top:239px;width:1px;height:5px;background:#6f7779;"></div>
<div style="position:absolute;left:883px;top:239px;width:1px;height:5px;background:#6f7779;"></div>
<div style="position:absolute;left:890px;top:239px;width:1px;height:5px;background:#6f7779;"></div>
<div style="position:absolute;left:896px;top:239px;width:1px;height:5px;background:#6f7779;"></div>
<div style="position:absolute;left:903px;top:239px;width:1px;height:5px;background:#6f7779;"></div>
<div style="position:absolute;left:910px;top:239px;width:1px;height:5px;background:#6f7779;"></div>
<div style="position:absolute;left:916px;top:239px;width:1px;height:5px;background:#6f7779;"></div>
<div style="position:absolute;left:923px;top:239px;width:1px;height:5px;background:#6f7779;"></div>
<div style="position:absolute;left:930px;top:239px;width:1px;height:5px;background:#6f7779;"></div>
<div style="position:absolute;left:936px;top:239px;width:1px;height:5px;background:#6f7779;"></div>
<div style="position:absolute;left:943px;top:239px;width:1px;height:5px;background:#6f7779;"></div>
<div style="position:absolute;left:950px;top:239px;width:1px;height:5px;background:#6f7779;"></div>
<div style="position:absolute;left:956px;top:239px;width:1px;height:5px;background:#6f7779;"></div>
<div style="position:absolute;left:963px;top:239px;width:1px;height:5px;background:#6f7779;"></div>
<div style="position:absolute;left:970px;top:239px;width:1px;height:5px;background:#6f7779;"></div>
<div style="position:absolute;left:976px;top:239px;width:1px;height:5px;background:#6f7779;"></div>
<div style="position:absolute;left:983px;top:239px;width:1px;height:5px;background:#6f7779;"></div>
<div style="position:absolute;left:990px;top:239px;width:1px;height:5px;background:#6f7779;"></div>
<div style="position:absolute;left:996px;top:239px;width:1px;height:5px;background:#6f7779;"></div>
<div style="position:absolute;left:1003px;top:239px;width:1px;height:5px;background:#6f7779;"></div>
<div style="position:absolute;left:1010px;top:239px;width:1px;height:5px;background:#6f7779;"></div>
<div style="position:absolute;left:1017px;top:239px;width:1px;height:5px;background:#6f7779;"></div>
<div style="position:absolute;left:1023px;top:239px;width:1px;height:5px;background:#6f7779;"></div>
<div style="position:absolute;left:1030px;top:239px;width:1px;height:5px;background:#6f7779;"></div>
<div style="position:absolute;left:1037px;top:239px;width:1px;height:5px;background:#6f7779;"></div>
<div style="position:absolute;left:1043px;top:239px;width:1px;height:5px;background:#6f7779;"></div>
<div style="position:absolute;left:1050px;top:239px;width:1px;height:5px;background:#6f7779;"></div>
<div style="position:absolute;left:1057px;top:239px;width:1px;height:5px;background:#6f7779;"></div>
<div style="position:absolute;left:1063px;top:239px;width:1px;height:5px;background:#6f7779;"></div>
<div style="position:absolute;left:1070px;top:239px;width:1px;height:5px;background:#6f7779;"></div>
<div style="position:absolute;left:1077px;top:239px;width:1px;height:5px;background:#6f7779;"></div>
<div style="position:absolute;left:1083px;top:239px;width:1px;height:5px;background:#6f7779;"></div>
<div style="position:absolute;left:1090px;top:239px;width:1px;height:5px;background:#6f7779;"></div>
<div style="position:absolute;left:1097px;top:239px;width:1px;height:5px;background:#6f7779;"></div>
<div style="position:absolute;left:1103px;top:239px;width:1px;height:5px;background:#6f7779;"></div>
<div style="position:absolute;left:1110px;top:239px;width:1px;height:5px;background:#6f7779;"></div>
<div style="position:absolute;left:1117px;top:239px;width:1px;height:5px;background:#6f7779;"></div>
<div style="position:absolute;left:1123px;top:239px;width:1px;height:5px;background:#6f7779;"></div>
<div style="position:absolute;left:1130px;top:239px;width:1px;height:5px;background:#6f7779;"></div>
<div style="position:absolute;left:1137px;top:239px;width:1px;height:5px;background:#6f7779;"></div>
<div style="position:absolute;left:1143px;top:239px;width:1px;height:5px;background:#6f7779;"></div>
<div style="position:absolute;left:1150px;top:239px;width:1px;height:5px;background:#6f7779;"></div>
<div style="position:absolute;left:1157px;top:239px;width:1px;height:5px;background:#6f7779;"></div>
<div style="position:absolute;left:1163px;top:239px;width:1px;height:5px;background:#6f7779;"></div>
<div style="position:absolute;left:1170px;top:239px;width:1px;height:5px;background:#6f7779;"></div>
<div style="position:absolute;left:1177px;top:239px;width:1px;height:5px;background:#6f7779;"></div>
<div style="position:absolute;left:1184px;top:239px;width:1px;height:5px;background:#6f7779;"></div>
<div style="position:absolute;left:1190px;top:239px;width:1px;height:5px;background:#6f7779;"></div>
<div style="position:absolute;left:1197px;top:239px;width:1px;height:5px;background:#6f7779;"></div>
<div style="position:absolute;left:1204px;top:239px;width:1px;height:5px;background:#6f7779;"></div>
<div style="position:absolute;left:1210px;top:239px;width:1px;height:5px;background:#6f7779;"></div>
<div style="position:absolute;left:1217px;top:239px;width:1px;height:5px;background:#6f7779;"></div>
<div style="position:absolute;left:1224px;top:239px;width:1px;height:5px;background:#6f7779;"></div>
<div style="position:absolute;left:1230px;top:239px;width:1px;height:5px;background:#6f7779;"></div>
<div style="position:absolute;left:1237px;top:239px;width:1px;height:5px;background:#6f7779;"></div>
<div style="position:absolute;left:1244px;top:239px;width:1px;height:5px;background:#6f7779;"></div>
<div style="position:absolute;left:1250px;top:239px;width:1px;height:5px;background:#6f7779;"></div>
<div style="position:absolute;left:1257px;top:239px;width:1px;height:5px;background:#6f7779;"></div>
<div style="position:absolute;left:1264px;top:239px;width:1px;height:5px;background:#6f7779;"></div>
<div style="position:absolute;left:1270px;top:239px;width:1px;height:5px;background:#6f7779;"></div>
<div style="position:absolute;left:1277px;top:239px;width:1px;height:5px;background:#6f7779;"></div>
<div style="position:absolute;left:1284px;top:239px;width:1px;height:5px;background:#6f7779;"></div>
<div style="position:absolute;left:1290px;top:239px;width:1px;height:5px;background:#6f7779;"></div>
<div style="position:absolute;left:1297px;top:239px;width:1px;height:5px;background:#6f7779;"></div>
<div style="position:absolute;left:1304px;top:239px;width:1px;height:5px;background:#6f7779;"></div>
<div style="position:absolute;left:1310px;top:239px;width:1px;height:5px;background:#6f7779;"></div>
<div style="position:absolute;left:1317px;top:239px;width:1px;height:5px;background:#6f7779;"></div>
<div style="position:absolute;left:1324px;top:239px;width:1px;height:5px;background:#6f7779;"></div>
<div style="position:absolute;left:1331px;top:239px;width:1px;height:5px;background:#6f7779;"></div>
<div style="position:absolute;left:1337px;top:239px;width:1px;height:5px;background:#6f7779;"></div>
<div style="position:absolute;left:1344px;top:239px;width:1px;height:5px;background:#6f7779;"></div>
<div style="position:absolute;left:1351px;top:239px;width:1px;height:5px;background:#6f7779;"></div>
<div style="position:absolute;left:1357px;top:239px;width:1px;height:5px;background:#6f7779;"></div>
<div style="position:absolute;left:1364px;top:239px;width:1px;height:5px;background:#6f7779;"></div>
<div style="position:absolute;left:1371px;top:239px;width:1px;height:5px;background:#6f7779;"></div>
<div style="position:absolute;left:1377px;top:239px;width:1px;height:5px;background:#6f7779;"></div>
<div style="position:absolute;left:1384px;top:239px;width:1px;height:5px;background:#6f7779;"></div>
<div style="position:absolute;left:1391px;top:239px;width:1px;height:5px;background:#6f7779;"></div>
<div style="position:absolute;left:1397px;top:239px;width:1px;height:5px;background:#6f7779;"></div>
<div style="position:absolute;left:1404px;top:239px;width:1px;height:5px;background:#6f7779;"></div>
<div style="position:absolute;left:1411px;top:239px;width:1px;height:5px;background:#6f7779;"></div>
<div style="position:absolute;left:1417px;top:239px;width:1px;height:5px;background:#6f7779;"></div>
<div style="position:absolute;left:1424px;top:239px;width:1px;height:5px;background:#6f7779;"></div>
<div style="position:absolute;left:1431px;top:239px;width:1px;height:5px;background:#6f7779;"></div>
<div style="position:absolute;left:1437px;top:239px;width:1px;height:5px;background:#6f7779;"></div>
<svg style="left:0;top:0" width="1439" height="662"><polygon points="663,234 675,234 663,244" fill="#8c9496"/><rect x="663" y="234" width="6" height="5" fill="#6d7476"/><path d="M663.5,244 L675,234" stroke="#6d7476" stroke-width="0.8"/></svg>
<div style="position:absolute;left:469px;top:244px;width:194px;height:418px;background:#3d3d3d;"></div>
<div style="position:absolute;left:663px;top:244px;width:776px;height:418px;background:#494949;"></div>
<div style="position:absolute;left:469px;top:300px;width:194px;height:5px;background:#454545;"></div>
<div style="position:absolute;left:663px;top:300px;width:776px;height:5px;background:#545454;"></div>
<div style="position:absolute;left:469px;top:473px;width:194px;height:1px;background:#363636;"></div>
<div style="position:absolute;left:663px;top:473px;width:776px;height:1px;background:#424242;"></div>
<div style="position:absolute;left:469px;top:499px;width:194px;height:1px;background:#363636;"></div>
<div style="position:absolute;left:663px;top:499px;width:776px;height:1px;background:#424242;"></div>
<div style="position:absolute;left:469px;top:503px;width:194px;height:1px;background:#363636;"></div>
<div style="position:absolute;left:663px;top:503px;width:776px;height:1px;background:#424242;"></div>
<div style="position:absolute;left:469px;top:507px;width:194px;height:1px;background:#363636;"></div>
<div style="position:absolute;left:663px;top:507px;width:776px;height:1px;background:#424242;"></div>
<div style="position:absolute;left:469px;top:511px;width:194px;height:1px;background:#363636;"></div>
<div style="position:absolute;left:663px;top:511px;width:776px;height:1px;background:#424242;"></div>
<div style="position:absolute;left:469px;top:536px;width:194px;height:1px;background:#363636;"></div>
<div style="position:absolute;left:663px;top:536px;width:776px;height:1px;background:#424242;"></div>
<div style="position:absolute;left:469px;top:561px;width:194px;height:1px;background:#363636;"></div>
<div style="position:absolute;left:663px;top:561px;width:776px;height:1px;background:#424242;"></div>
<div style="position:absolute;left:469px;top:586px;width:194px;height:1px;background:#363636;"></div>
<div style="position:absolute;left:663px;top:586px;width:776px;height:1px;background:#424242;"></div>
<div style="position:absolute;left:469px;top:611px;width:194px;height:1px;background:#363636;"></div>
<div style="position:absolute;left:663px;top:611px;width:776px;height:1px;background:#424242;"></div>
<div style="position:absolute;left:469px;top:636px;width:194px;height:1px;background:#363636;"></div>
<div style="position:absolute;left:663px;top:636px;width:776px;height:1px;background:#424242;"></div>
<div style="position:absolute;left:461px;top:244px;width:8px;height:418px;background:#333333;"></div>
<div style="position:absolute;left:109px;top:300px;width:353px;height:5px;background:#3a3a3a;"></div>
<div style="position:absolute;left:109px;top:243px;width:353px;height:57px;background:#333333;border:1px solid #414141;border-bottom:none;box-sizing:border-box;"></div>
<div style="position:absolute;left:110px;top:277px;width:292px;height:22px;background:#292929;"></div>
<div style="position:absolute;left:407px;top:244px;width:29px;height:55px;background:#262626;"></div>
<div style="position:absolute;left:113.00px;top:255.27px;font-size:11.5px;line-height:11.5px;color:#ececec;font-weight:normal;white-space:nowrap;transform:scaleX(0.8973);transform-origin:0 0;">MASTER</div>
<svg style="left:0;top:0" width="1" height="1"><defs>
<radialGradient id="armg" cx="0.4" cy="0.3" r="0.8"><stop offset="0" stop-color="#a86450"/><stop offset="0.6" stop-color="#8a4230"/><stop offset="1" stop-color="#5e2418"/></radialGradient>
</defs></svg>
<svg style="left:167px;top:251px" width="34" height="20"><defs><clipPath id="rc167251"><path d="M6,0 L34,0 L34,20 L0,20 L0,6 Z"/></clipPath></defs>
<g clip-path="url(#rc167251)"><rect width="34" height="20" fill="#2b2b2b"/>
<path d="M6.800000000000001,20 L12.92,0 L16.32,0 L10.2,20 Z" fill="#23b8a0"/>
<path d="M12.58,20 L18.700000000000003,0 L22.1,0 L15.979999999999999,20 Z" fill="#b8a820"/>
<path d="M18.36,20 L24.48,0 L27.88,0 L21.76,20 Z" fill="#2a4a68"/></g>
<path d="M6,0.5 L33.5,0.5 L33.5,19.5 L0.5,19.5 L0.5,6 Z" fill="none" stroke="#161616" stroke-width="1"/></svg>
<div style="position:absolute;left:169.32px;top:255.99px;font-size:11px;line-height:11px;color:#eeeeee;font-weight:normal;white-space:nowrap;text-shadow:0 0 1px #000;">Route</div>
<svg style="left:208px;top:251px" width="37" height="20"><path d="M6,0.5 L36.5,0.5 L36.5,19.5 L0.5,19.5 L0.5,6 Z" fill="#6c6f70" stroke="#1a1a1a"/>
<path d="M6,1 L21,1 L21,19 L1,19 L1,6 Z" fill="#2b7f66"/><rect x="9" y="1" width="22" height="1.6" fill="#2ee0b0"/>
<path d="M26,7.5 A4.3,4.3 0 1 0 32,7.5 M29,5 L29,10" stroke="#35d0a8" stroke-width="1.2" fill="none"/></svg>
<div style="position:absolute;left:212.00px;top:255.69px;font-size:11px;line-height:11px;color:#e6e6e6;font-weight:normal;white-space:nowrap;transform:scaleX(0.8537);transform-origin:0 0;">FX</div>
<svg style="left:251px;top:251px" width="41" height="20"><path d="M6,0.5 L40.5,0.5 L40.5,19.5 L0.5,19.5 L0.5,6 Z" fill="#67696a" stroke="#202020"/>
<rect x="11" y="1.5" width="22" height="1" fill="#4a4c4d"/>
<path d="M5,14.5 L10.5,9 L15.5,13" stroke="#2e2e2e" stroke-width="1.4" fill="none"/><rect x="3.5" y="13" width="3" height="3" fill="#2e2e2e"/><rect x="9" y="7.5" width="3" height="3" fill="#2e2e2e"/><rect x="14" y="11.5" width="3" height="3" fill="#2e2e2e"/></svg>
<div style="position:absolute;left:270.00px;top:255.34px;font-size:12px;line-height:12px;color:#3c3e3f;font-weight:normal;white-space:nowrap;transform:scaleX(0.9504);transform-origin:0 0;">trim</div>
<div style="position:absolute;left:299px;top:251px;width:21px;height:20px;background:#262626;border:1px solid #111;box-sizing:border-box;"></div>
<svg style="left:0;top:0" width="1" height="1"><circle cx="307" cy="261" r="4.4" stroke="#9a9a9a" stroke-width="0.9" fill="none"/><circle cx="312.5" cy="261" r="4.4" stroke="#9a9a9a" stroke-width="0.9" fill="none"/></svg>
<div style="position:absolute;left:324.00px;top:255.96px;font-size:9.5px;line-height:9.5px;color:#9c9c9c;font-weight:normal;white-space:nowrap;transform:scaleX(0.8459);transform-origin:0 0;">MONO</div>
<div style="position:absolute;left:110px;top:277px;width:292px;height:22px;background:#262626;"></div>
<div style="position:absolute;left:115px;top:287px;width:282px;height:2.5px;background:#050505;"></div>
<svg style="left:0;top:0" width="1" height="1"><ellipse cx="314" cy="297" rx="8" ry="3" fill="#111" opacity="0.5"/></svg>
<div style="position:absolute;left:306px;top:280px;width:16px;height:17px;background:linear-gradient(90deg,#7a7a7a,#f4f4f4 30%,#9a9a9a 48%,#333 50%,#d8d8d8 55%,#f0f0f0 75%,#777);border-radius:2px;"></div>
<div style="position:absolute;left:410.67px;top:248.46px;font-size:9.5px;line-height:9.5px;color:#8a8a8a;font-weight:normal;white-space:nowrap;">-89.2</div>
<div style="position:absolute;left:413.05px;top:264.46px;font-size:9.5px;line-height:9.5px;color:#b8b8c0;font-weight:normal;white-space:nowrap;">-24-</div>
<div style="position:absolute;left:413.05px;top:278.46px;font-size:9.5px;line-height:9.5px;color:#b8b8c0;font-weight:normal;white-space:nowrap;">-42-</div>
<div style="position:absolute;left:413.05px;top:291.46px;font-size:9.5px;line-height:9.5px;color:#b8b8c0;font-weight:normal;white-space:nowrap;">-60-</div>
<div style="position:absolute;left:407px;top:297.5px;width:29px;height:3px;background:#333;"></div>
<div style="position:absolute;left:436px;top:248px;width:21px;height:20px;background:linear-gradient(180deg,#3c3c3c,#2e2e2e);border:1px solid #161616;box-sizing:border-box;box-shadow:0 2px 0 #222;"></div>
<div style="position:absolute;left:442.75px;top:252.47px;font-size:11.5px;line-height:11.5px;color:#c85a56;font-weight:normal;white-space:nowrap;transform:scaleX(0.7829);transform-origin:0 0;">M</div>
<div style="position:absolute;left:436px;top:270px;width:21px;height:20px;background:linear-gradient(180deg,#3c3c3c,#2e2e2e);border:1px solid #161616;box-sizing:border-box;box-shadow:0 2px 0 #222;"></div>
<div style="position:absolute;left:443.25px;top:274.47px;font-size:11.5px;line-height:11.5px;color:#c8c05c;font-weight:normal;white-space:nowrap;transform:scaleX(0.8474);transform-origin:0 0;">S</div>
<div style="position:absolute;left:110px;top:305px;width:17px;height:169px;background:#c9c9e6;"></div>
<div style="position:absolute;left:127px;top:305px;width:2px;height:169px;background:#ffffff;"></div>
<div style="position:absolute;left:129px;top:305px;width:1px;height:169px;background:#3a3a4a;"></div>
<div style="position:absolute;left:130px;top:305px;width:259px;height:169px;background:#7274be;"></div>
<div style="position:absolute;left:389px;top:305px;width:72px;height:169px;background:#262626;"></div>
<div style="position:absolute;left:115.30px;top:385.77px;font-size:11.5px;line-height:11.5px;color:#2a2a3a;font-weight:normal;white-space:nowrap;">1</div>
<svg style="left:0;top:0" width="1" height="1"><path d="M113,471 L113,464 L117,464 L118,465.5 L122,465.5 L122,471 Z" fill="#b0b0cc"/></svg>
<div style="position:absolute;left:135px;top:311px;width:146px;height:22px;background:#262626;"></div>
<svg style="left:0;top:0" width="1" height="1"><circle cx="146.3" cy="322.8" r="10.5" fill="#151515" opacity="0.7"/><circle cx="145.5" cy="321.5" r="9.8" fill="url(#armg)" stroke="#141414" stroke-width="1.4"/><circle cx="145.5" cy="321.5" r="4.8" fill="none" stroke="#d8aca2" stroke-width="2"/></svg>
<svg style="left:0;top:0" width="1" height="1"><path d="M158.5,320 L161.5,320 L166,316.5 L166,326.5 L161.5,323 L158.5,323 Z" fill="none" stroke="#a8a8a8" stroke-width="1.1"/><path d="M168.5,319 L168.5,324" stroke="#a8a8a8" stroke-width="1"/></svg>
<div style="position:absolute;left:175.00px;top:316.34px;font-size:12px;line-height:12px;color:#f2f2f2;font-weight:normal;white-space:nowrap;transform:scaleX(0.9371);transform-origin:0 0;">VID2</div>
<div style="position:absolute;left:136px;top:338px;width:160px;height:22px;background:#262626;"></div>
<div style="position:absolute;left:141px;top:348px;width:150px;height:2.5px;background:#050505;"></div>
<svg style="left:0;top:0" width="1" height="1"><ellipse cx="247" cy="358" rx="8" ry="3" fill="#111" opacity="0.5"/></svg>
<div style="position:absolute;left:239px;top:341px;width:16px;height:17px;background:linear-gradient(90deg,#7a7a7a,#f4f4f4 30%,#9a9a9a 48%,#333 50%,#d8d8d8 55%,#f0f0f0 75%,#777);border-radius:2px;"></div>
<svg style="left:303px;top:340px" width="35" height="19"><defs><clipPath id="rc303340"><path d="M6,0 L35,0 L35,19 L0,19 L0,6 Z"/></clipPath></defs>
<g clip-path="url(#rc303340)"><rect width="35" height="19" fill="#2f3040"/>
<path d="M7.0,19 L13.3,0 L16.8,0 L10.5,19 Z" fill="#23b8a0"/>
<path d="M12.95,19 L19.25,0 L22.75,0 L16.45,19 Z" fill="#b8a820"/>
<path d="M18.900000000000002,19 L25.2,0 L28.7,0 L22.400000000000002,19 Z" fill="#2a4a68"/></g>
<path d="M6,0.5 L34.5,0.5 L34.5,18.5 L0.5,18.5 L0.5,6 Z" fill="none" stroke="#161616" stroke-width="1"/></svg>
<div style="position:absolute;left:305.82px;top:344.49px;font-size:11px;line-height:11px;color:#eeeeee;font-weight:normal;white-space:nowrap;text-shadow:0 0 1px #000;">Route</div>
<svg style="left:344px;top:340px" width="37" height="19"><path d="M6,0.5 L36.5,0.5 L36.5,18.5 L0.5,18.5 L0.5,6 Z" fill="#8c8dc0" stroke="#4a4b70"/>
<path d="M6,1 L21,1 L21,18 L1,18 L1,6 Z" fill="#6d6fa8"/><rect x="9" y="1" width="22" height="1" fill="#5a5c90"/>
<path d="M26,7 A4.2,4.2 0 1 0 32,7 M29,4.5 L29,9.5" stroke="#4a4c70" stroke-width="1.1" fill="none"/></svg>
<div style="position:absolute;left:348.50px;top:344.69px;font-size:11px;line-height:11px;color:#e6e6f0;font-weight:normal;white-space:nowrap;transform:scaleX(0.8537);transform-origin:0 0;">FX</div>
<svg style="left:136px;top:366px" width="42" height="21"><path d="M6,0.5 L41.5,0.5 L41.5,20.5 L0.5,20.5 L0.5,6 Z" fill="#8284c6" stroke="#5a5c9a"/>
<rect x="11" y="1.5" width="22" height="1" fill="#5a5c9a"/>
<path d="M5,15 L10.5,9.5 L15.5,13.5" stroke="#34365a" stroke-width="1.4" fill="none"/><rect x="3.5" y="13.5" width="3" height="3" fill="#34365a"/><rect x="9" y="8" width="3" height="3" fill="#34365a"/><rect x="14" y="12" width="3" height="3" fill="#34365a"/></svg>
<div style="position:absolute;left:154.00px;top:370.34px;font-size:12px;line-height:12px;color:#38396a;font-weight:normal;white-space:nowrap;transform:scaleX(0.9504);transform-origin:0 0;">trim</div>
<svg style="left:0;top:0" width="1" height="1"><defs><radialGradient id="knobg" cx="0.45" cy="0.3" r="0.8"><stop offset="0" stop-color="#dcdce8"/><stop offset="1" stop-color="#8e90b0"/></radialGradient></defs>
<circle cx="194.5" cy="377" r="9.5" fill="#4a4c80" opacity="0.6"/><circle cx="194.5" cy="375.5" r="9.3" fill="url(#knobg)" stroke="#5a5c8a" stroke-width="0.8"/><path d="M194.5,369 L194.5,374" stroke="#333" stroke-width="1"/>
<circle cx="217" cy="377" r="9.5" fill="#4a4c80" opacity="0.6"/><circle cx="217" cy="375.5" r="9.3" fill="url(#knobg)" stroke="#5a5c8a" stroke-width="0.8"/><path d="M217.5,378 L219,381" stroke="#333" stroke-width="1"/>
<path d="M234.5,366.5 L263,366.5 A9.5,9.5 0 0 1 263,385.5 L234.5,385.5 Z" fill="#7a7c9e" stroke="#8e90c8" stroke-width="1"/>
<circle cx="263.3" cy="376" r="6" fill="#9a9cb8"/><path d="M259.8,373 L266.8,373 L263.3,379.5 Z" fill="#7a7c9e"/>
<path d="M137,403 L146,393.5 L316,393.5 A9.5,9.5 0 0 1 316,412.5 L146,412.5 Z" fill="#a4a6da"/>
<path d="M165,393.5 L316,393.5 A9.5,9.5 0 0 1 316,412.5 L165,412.5 L158,403 Z" fill="#7b7d9e" stroke="#8f91cc" stroke-width="0.8"/>
<circle cx="316.9" cy="403" r="6.2" fill="#9294b0"/><path d="M313.2,400 L320.6,400 L316.9,406.5 Z" fill="#7b7d9e"/>
</svg>
<div style="position:absolute;left:146.75px;top:394.80px;font-size:8.5px;line-height:8.5px;color:#6a6ca8;font-weight:normal;white-space:nowrap;">IN</div>
<div style="position:absolute;left:238.02px;top:369.77px;font-size:11.5px;line-height:11.5px;color:#e4e4f2;font-weight:normal;white-space:nowrap;">in</div>
<div style="position:absolute;left:145.57px;top:402.50px;font-size:8.5px;line-height:8.5px;color:#6a6ca8;font-weight:normal;white-space:nowrap;">FX</div>
<div style="position:absolute;left:185.50px;top:396.77px;font-size:11.5px;line-height:11.5px;color:#f4f4f8;font-weight:normal;white-space:nowrap;transform:scaleX(0.8986);transform-origin:0 0;">MIDI: All: All channels</div>
<div style="position:absolute;left:136.00px;top:419.61px;font-size:10.5px;line-height:10.5px;color:#1e1e30;font-weight:normal;white-space:nowrap;transform:scaleX(0.9916);transform-origin:0 0;">0.00dB</div>
<div style="position:absolute;left:314.00px;top:419.61px;font-size:10.5px;line-height:10.5px;color:#1e1e30;font-weight:normal;white-space:nowrap;transform:scaleX(1.0623);transform-origin:0 0;">center</div>
<div style="position:absolute;left:353.50px;top:419.61px;font-size:10.5px;line-height:10.5px;color:#1e1e30;font-weight:normal;white-space:nowrap;transform:scaleX(0.9844);transform-origin:0 0;">100W</div>
<div style="position:absolute;left:408.90px;top:311.46px;font-size:9.5px;line-height:9.5px;color:#9c9c9c;font-weight:normal;white-space:nowrap;">-inf</div>
<div style="position:absolute;left:408.69px;top:333.46px;font-size:9.5px;line-height:9.5px;color:#7a7a86;font-weight:normal;white-space:nowrap;">-6-</div>
<div style="position:absolute;left:406.05px;top:361.96px;font-size:9.5px;line-height:9.5px;color:#7a7a86;font-weight:normal;white-space:nowrap;">-18-</div>
<div style="position:absolute;left:406.05px;top:389.96px;font-size:9.5px;line-height:9.5px;color:#7a7a86;font-weight:normal;white-space:nowrap;">-30-</div>
<div style="position:absolute;left:406.05px;top:418.96px;font-size:9.5px;line-height:9.5px;color:#7a7a86;font-weight:normal;white-space:nowrap;">-42-</div>
<div style="position:absolute;left:406.05px;top:447.46px;font-size:9.5px;line-height:9.5px;color:#7a7a86;font-weight:normal;white-space:nowrap;">-54-</div>
<div style="position:absolute;left:436px;top:308px;width:21px;height:20px;background:linear-gradient(180deg,#3c3c3c,#2e2e2e);border:1px solid #161616;box-sizing:border-box;box-shadow:0 2px 0 #222;"></div>
<div style="position:absolute;left:442.75px;top:312.47px;font-size:11.5px;line-height:11.5px;color:#c85a56;font-weight:normal;white-space:nowrap;transform:scaleX(0.7829);transform-origin:0 0;">M</div>
<div style="position:absolute;left:436px;top:330px;width:21px;height:20px;background:linear-gradient(180deg,#3c3c3c,#2e2e2e);border:1px solid #161616;box-sizing:border-box;box-shadow:0 2px 0 #222;"></div>
<div style="position:absolute;left:443.25px;top:334.47px;font-size:11.5px;line-height:11.5px;color:#c8c05c;font-weight:normal;white-space:nowrap;transform:scaleX(0.8474);transform-origin:0 0;">S</div>
<svg style="left:0;top:0" width="1" height="1"><circle cx="447" cy="460" r="6.3" fill="#4a4a4a" stroke="#5c5c5c"/><circle cx="447" cy="460" r="3.3" stroke="#aaa" stroke-width="1" fill="none"/><path d="M443.5,464 L450.5,456" stroke="#aaa" stroke-width="1"/></svg>
<div style="position:absolute;left:110px;top:474px;width:16px;height:25px;background:#333333;"></div>
<svg style="left:0;top:0" width="1" height="1"><circle cx="117.5" cy="482" r="5.5" fill="#9c9c9c"/><path d="M115.5,479 L120.5,482 L115.5,485 Z" fill="#333"/><path d="M110,499 L110,494.5 Q110,490 118,490 Q126,490 126,494.5 L126,499 Z" fill="#2a1aa0"/></svg>
<div style="position:absolute;left:114.44px;top:488.69px;font-size:11px;line-height:11px;color:#ffffff;font-weight:normal;white-space:nowrap;">2</div>
<div style="position:absolute;left:130px;top:474px;width:259px;height:25px;background:#2a1a9c;"></div>
<div style="position:absolute;left:389px;top:474px;width:72px;height:25px;background:#292929;"></div>
<div style="position:absolute;left:136px;top:476px;width:145px;height:21.5px;background:#262626;"></div>
<svg style="left:0;top:0" width="1" height="1"><circle cx="146.8" cy="488.3" r="10.5" fill="#151515" opacity="0.7"/><circle cx="146" cy="487.0" r="9.8" fill="url(#armg)" stroke="#141414" stroke-width="1.4"/><circle cx="146" cy="487.0" r="4.8" fill="none" stroke="#d8aca2" stroke-width="2"/></svg>
<svg style="left:0;top:0" width="1" height="1"><path d="M158.5,485.5 L161.5,485.5 L166,482.0 L166,492.0 L161.5,488.5 L158.5,488.5 Z" fill="none" stroke="#a8a8a8" stroke-width="1.1"/><path d="M168.5,484.5 L168.5,489.5" stroke="#a8a8a8" stroke-width="1"/></svg>
<div style="position:absolute;left:175.00px;top:481.34px;font-size:12px;line-height:12px;color:#7b78e8;font-weight:normal;white-space:nowrap;">Эмбиенсы</div>
<div style="position:absolute;left:418px;top:477px;width:20px;height:19.5px;background:linear-gradient(180deg,#3c3c3c,#2e2e2e);border:1px solid #161616;box-sizing:border-box;box-shadow:0 2px 0 #222;"></div>
<div style="position:absolute;left:424.25px;top:481.22px;font-size:11.5px;line-height:11.5px;color:#c85a56;font-weight:normal;white-space:nowrap;transform:scaleX(0.7829);transform-origin:0 0;">M</div>
<div style="position:absolute;left:437.5px;top:477px;width:20px;height:19.5px;background:linear-gradient(180deg,#3c3c3c,#2e2e2e);border:1px solid #161616;box-sizing:border-box;box-shadow:0 2px 0 #222;"></div>
<div style="position:absolute;left:444.25px;top:481.22px;font-size:11.5px;line-height:11.5px;color:#c8c05c;font-weight:normal;white-space:nowrap;transform:scaleX(0.8474);transform-origin:0 0;">S</div>
<div style="position:absolute;left:397.40px;top:482.96px;font-size:9.5px;line-height:9.5px;color:#8c8c8c;font-weight:normal;white-space:nowrap;">-inf</div>
<div style="position:absolute;left:130px;top:499px;width:331px;height:12px;background:#333333;"></div>
<div style="position:absolute;left:130px;top:500px;width:331px;height:3px;background:#4b55c3;"></div>
<div style="position:absolute;left:130px;top:504px;width:331px;height:3px;background:#4b55c3;"></div>
<div style="position:absolute;left:130px;top:508px;width:331px;height:3px;background:#4b55c3;"></div>
<div style="position:absolute;left:146px;top:499px;width:4px;height:12px;background:#333333;"></div>
<div style="position:absolute;left:110px;top:511px;width:16px;height:25px;background:#1a983e;"></div>
<div style="position:absolute;left:130px;top:511px;width:259px;height:25px;background:#1a983e;"></div>
<div style="position:absolute;left:389px;top:511px;width:72px;height:25px;background:#292929;"></div>
<div style="position:absolute;left:136px;top:513px;width:145px;height:21.5px;background:#262626;"></div>
<svg style="left:0;top:0" width="1" height="1"><circle cx="146.8" cy="525.3" r="10.5" fill="#151515" opacity="0.7"/><circle cx="146" cy="524.0" r="9.8" fill="url(#armg)" stroke="#141414" stroke-width="1.4"/><circle cx="146" cy="524.0" r="4.8" fill="none" stroke="#d8aca2" stroke-width="2"/></svg>
<svg style="left:0;top:0" width="1" height="1"><path d="M158.5,522.5 L161.5,522.5 L166,519.0 L166,529.0 L161.5,525.5 L158.5,525.5 Z" fill="none" stroke="#a8a8a8" stroke-width="1.1"/><path d="M168.5,521.5 L168.5,526.5" stroke="#a8a8a8" stroke-width="1"/></svg>
<div style="position:absolute;left:175.00px;top:518.34px;font-size:12px;line-height:12px;color:#88ee90;font-weight:normal;white-space:nowrap;">R Природа</div>
<div style="position:absolute;left:418px;top:514px;width:20px;height:19.5px;background:linear-gradient(180deg,#3c3c3c,#2e2e2e);border:1px solid #161616;box-sizing:border-box;box-shadow:0 2px 0 #222;"></div>
<div style="position:absolute;left:424.25px;top:518.22px;font-size:11.5px;line-height:11.5px;color:#c85a56;font-weight:normal;white-space:nowrap;transform:scaleX(0.7829);transform-origin:0 0;">M</div>
<div style="position:absolute;left:437.5px;top:514px;width:20px;height:19.5px;background:linear-gradient(180deg,#3c3c3c,#2e2e2e);border:1px solid #161616;box-sizing:border-box;box-shadow:0 2px 0 #222;"></div>
<div style="position:absolute;left:444.25px;top:518.22px;font-size:11.5px;line-height:11.5px;color:#c8c05c;font-weight:normal;white-space:nowrap;transform:scaleX(0.8474);transform-origin:0 0;">S</div>
<div style="position:absolute;left:393.17px;top:519.96px;font-size:9.5px;line-height:9.5px;color:#8c8c8c;font-weight:normal;white-space:nowrap;">-84.4</div>
<div style="position:absolute;left:114.80px;top:518.77px;font-size:11.5px;line-height:11.5px;color:#b8ffb8;font-weight:normal;white-space:nowrap;">6</div>
<div style="position:absolute;left:110px;top:536px;width:16px;height:25px;background:#333333;"></div>
<svg style="left:0;top:0" width="1" height="1"><circle cx="117.5" cy="544" r="5.5" fill="#9c9c9c"/><path d="M114.5,542 L120.5,542 L117.5,547 Z" fill="#333"/><path d="M110,561 L110,556.5 Q110,552 118,552 Q126,552 126,556.5 L126,561 Z" fill="#92171f"/></svg>
<div style="position:absolute;left:114.30px;top:550.27px;font-size:11.5px;line-height:11.5px;color:#ffd0d0;font-weight:normal;white-space:nowrap;">7</div>
<div style="position:absolute;left:130px;top:536px;width:259px;height:25px;background:#92171f;"></div>
<div style="position:absolute;left:389px;top:536px;width:72px;height:25px;background:#292929;"></div>
<div style="position:absolute;left:136px;top:538px;width:145px;height:21.5px;background:#262626;"></div>
<svg style="left:0;top:0" width="1" height="1"><circle cx="146.8" cy="550.3" r="10.5" fill="#151515" opacity="0.7"/><circle cx="146" cy="549.0" r="9.8" fill="url(#armg)" stroke="#141414" stroke-width="1.4"/><circle cx="146" cy="549.0" r="4.8" fill="none" stroke="#d8aca2" stroke-width="2"/></svg>
<svg style="left:0;top:0" width="1" height="1"><path d="M158.5,547.5 L161.5,547.5 L166,544.0 L166,554.0 L161.5,550.5 L158.5,550.5 Z" fill="none" stroke="#a8a8a8" stroke-width="1.1"/><path d="M168.5,546.5 L168.5,551.5" stroke="#a8a8a8" stroke-width="1"/></svg>
<div style="position:absolute;left:175.00px;top:543.34px;font-size:12px;line-height:12px;color:#ee7070;font-weight:normal;white-space:nowrap;">1 Заставка</div>
<div style="position:absolute;left:418px;top:539px;width:20px;height:19.5px;background:linear-gradient(180deg,#3c3c3c,#2e2e2e);border:1px solid #161616;box-sizing:border-box;box-shadow:0 2px 0 #222;"></div>
<div style="position:absolute;left:424.25px;top:543.22px;font-size:11.5px;line-height:11.5px;color:#c85a56;font-weight:normal;white-space:nowrap;transform:scaleX(0.7829);transform-origin:0 0;">M</div>
<div style="position:absolute;left:437.5px;top:539px;width:20px;height:19.5px;background:linear-gradient(180deg,#3c3c3c,#2e2e2e);border:1px solid #161616;box-sizing:border-box;box-shadow:0 2px 0 #222;"></div>
<div style="position:absolute;left:444.25px;top:543.22px;font-size:11.5px;line-height:11.5px;color:#c8c05c;font-weight:normal;white-space:nowrap;transform:scaleX(0.8474);transform-origin:0 0;">S</div>
<div style="position:absolute;left:397.40px;top:544.96px;font-size:9.5px;line-height:9.5px;color:#8c8c8c;font-weight:normal;white-space:nowrap;">-inf</div>
<div style="position:absolute;left:130px;top:561px;width:16px;height:25px;background:#cad58c;"></div>
<div style="position:absolute;left:150px;top:561px;width:239px;height:25px;background:#cad58c;"></div>
<div style="position:absolute;left:389px;top:561px;width:72px;height:25px;background:#292929;"></div>
<div style="position:absolute;left:156px;top:563px;width:145px;height:21.5px;background:#262626;"></div>
<svg style="left:0;top:0" width="1" height="1"><circle cx="166.8" cy="575.3" r="10.5" fill="#151515" opacity="0.7"/><circle cx="166" cy="574.0" r="9.8" fill="url(#armg)" stroke="#141414" stroke-width="1.4"/><circle cx="166" cy="574.0" r="4.8" fill="none" stroke="#d8aca2" stroke-width="2"/></svg>
<svg style="left:0;top:0" width="1" height="1"><path d="M178.5,572.5 L181.5,572.5 L186,569.0 L186,579.0 L181.5,575.5 L178.5,575.5 Z" fill="none" stroke="#a8a8a8" stroke-width="1.1"/><path d="M188.5,571.5 L188.5,576.5" stroke="#a8a8a8" stroke-width="1"/></svg>
<div style="position:absolute;left:418px;top:564px;width:20px;height:19.5px;background:linear-gradient(180deg,#3c3c3c,#2e2e2e);border:1px solid #161616;box-sizing:border-box;box-shadow:0 2px 0 #222;"></div>
<div style="position:absolute;left:424.25px;top:568.22px;font-size:11.5px;line-height:11.5px;color:#c85a56;font-weight:normal;white-space:nowrap;transform:scaleX(0.7829);transform-origin:0 0;">M</div>
<div style="position:absolute;left:437.5px;top:564px;width:20px;height:19.5px;background:linear-gradient(180deg,#3c3c3c,#2e2e2e);border:1px solid #161616;box-sizing:border-box;box-shadow:0 2px 0 #222;"></div>
<div style="position:absolute;left:444.25px;top:568.22px;font-size:11.5px;line-height:11.5px;color:#c8c05c;font-weight:normal;white-space:nowrap;transform:scaleX(0.8474);transform-origin:0 0;">S</div>
<div style="position:absolute;left:397.40px;top:569.96px;font-size:9.5px;line-height:9.5px;color:#8c8c8c;font-weight:normal;white-space:nowrap;">-inf</div>
<div style="position:absolute;left:195.00px;top:568.34px;font-size:12px;line-height:12px;color:#e8eeb0;font-weight:normal;white-space:nowrap;width:106px;height:15px;overflow:hidden;">Ancient_Game_Magic</div>
<div style="position:absolute;left:134.80px;top:568.77px;font-size:11.5px;line-height:11.5px;color:#6a6a22;font-weight:normal;white-space:nowrap;">8</div>
<div style="position:absolute;left:130px;top:586px;width:16px;height:25px;background:#cad58c;"></div>
<div style="position:absolute;left:150px;top:586px;width:239px;height:25px;background:#cad58c;"></div>
<div style="position:absolute;left:389px;top:586px;width:72px;height:25px;background:#292929;"></div>
<div style="position:absolute;left:156px;top:588px;width:145px;height:21.5px;background:#262626;"></div>
<svg style="left:0;top:0" width="1" height="1"><circle cx="166.8" cy="600.3" r="10.5" fill="#151515" opacity="0.7"/><circle cx="166" cy="599.0" r="9.8" fill="url(#armg)" stroke="#141414" stroke-width="1.4"/><circle cx="166" cy="599.0" r="4.8" fill="none" stroke="#d8aca2" stroke-width="2"/></svg>
<svg style="left:0;top:0" width="1" height="1"><path d="M178.5,597.5 L181.5,597.5 L186,594.0 L186,604.0 L181.5,600.5 L178.5,600.5 Z" fill="none" stroke="#a8a8a8" stroke-width="1.1"/><path d="M188.5,596.5 L188.5,601.5" stroke="#a8a8a8" stroke-width="1"/></svg>
<div style="position:absolute;left:418px;top:589px;width:20px;height:19.5px;background:linear-gradient(180deg,#3c3c3c,#2e2e2e);border:1px solid #161616;box-sizing:border-box;box-shadow:0 2px 0 #222;"></div>
<div style="position:absolute;left:424.25px;top:593.22px;font-size:11.5px;line-height:11.5px;color:#c85a56;font-weight:normal;white-space:nowrap;transform:scaleX(0.7829);transform-origin:0 0;">M</div>
<div style="position:absolute;left:437.5px;top:589px;width:20px;height:19.5px;background:linear-gradient(180deg,#3c3c3c,#2e2e2e);border:1px solid #161616;box-sizing:border-box;box-shadow:0 2px 0 #222;"></div>
<div style="position:absolute;left:444.25px;top:593.22px;font-size:11.5px;line-height:11.5px;color:#c8c05c;font-weight:normal;white-space:nowrap;transform:scaleX(0.8474);transform-origin:0 0;">S</div>
<div style="position:absolute;left:397.40px;top:594.96px;font-size:9.5px;line-height:9.5px;color:#8c8c8c;font-weight:normal;white-space:nowrap;">-inf</div>
<div style="position:absolute;left:134.80px;top:593.77px;font-size:11.5px;line-height:11.5px;color:#6a6a22;font-weight:normal;white-space:nowrap;">9</div>
<div style="position:absolute;left:130px;top:611px;width:16px;height:25px;background:#cad58c;border-radius:0 0 8px 8px;"></div>
<div style="position:absolute;left:150px;top:611px;width:239px;height:25px;background:#cad58c;"></div>
<div style="position:absolute;left:389px;top:611px;width:72px;height:25px;background:#292929;"></div>
<div style="position:absolute;left:156px;top:613px;width:145px;height:21.5px;background:#262626;"></div>
<svg style="left:0;top:0" width="1" height="1"><circle cx="166.8" cy="625.3" r="10.5" fill="#151515" opacity="0.7"/><circle cx="166" cy="624.0" r="9.8" fill="url(#armg)" stroke="#141414" stroke-width="1.4"/><circle cx="166" cy="624.0" r="4.8" fill="none" stroke="#d8aca2" stroke-width="2"/></svg>
<svg style="left:0;top:0" width="1" height="1"><path d="M178.5,622.5 L181.5,622.5 L186,619.0 L186,629.0 L181.5,625.5 L178.5,625.5 Z" fill="none" stroke="#a8a8a8" stroke-width="1.1"/><path d="M188.5,621.5 L188.5,626.5" stroke="#a8a8a8" stroke-width="1"/></svg>
<div style="position:absolute;left:418px;top:614px;width:20px;height:19.5px;background:linear-gradient(180deg,#3c3c3c,#2e2e2e);border:1px solid #161616;box-sizing:border-box;box-shadow:0 2px 0 #222;"></div>
<div style="position:absolute;left:424.25px;top:618.22px;font-size:11.5px;line-height:11.5px;color:#c85a56;font-weight:normal;white-space:nowrap;transform:scaleX(0.7829);transform-origin:0 0;">M</div>
<div style="position:absolute;left:437.5px;top:614px;width:20px;height:19.5px;background:linear-gradient(180deg,#3c3c3c,#2e2e2e);border:1px solid #161616;box-sizing:border-box;box-shadow:0 2px 0 #222;"></div>
<div style="position:absolute;left:444.25px;top:618.22px;font-size:11.5px;line-height:11.5px;color:#c8c05c;font-weight:normal;white-space:nowrap;transform:scaleX(0.8474);transform-origin:0 0;">S</div>
<div style="position:absolute;left:397.40px;top:619.96px;font-size:9.5px;line-height:9.5px;color:#8c8c8c;font-weight:normal;white-space:nowrap;">-inf</div>
<div style="position:absolute;left:131.60px;top:612.27px;font-size:11.5px;line-height:11.5px;color:#6a6a22;font-weight:normal;white-space:nowrap;">10</div>
<svg style="left:0;top:0" width="1" height="1"><path d="M134,631 L134,624.5 L138,624.5 L139,626 L142.5,626 L142.5,631 Z" fill="#a0a060"/></svg>
<div style="position:absolute;left:110px;top:636.5px;width:16px;height:25.5px;background:#92171f;"></div>
<div style="position:absolute;left:130px;top:636.5px;width:259px;height:25.5px;background:#92171f;"></div>
<div style="position:absolute;left:389px;top:636.5px;width:72px;height:25.5px;background:#292929;"></div>
<div style="position:absolute;left:136px;top:638.5px;width:145px;height:22.0px;background:#262626;"></div>
<svg style="left:0;top:0" width="1" height="1"><circle cx="146.8" cy="651.05" r="10.5" fill="#151515" opacity="0.7"/><circle cx="146" cy="649.75" r="9.8" fill="url(#armg)" stroke="#141414" stroke-width="1.4"/><circle cx="146" cy="649.75" r="4.8" fill="none" stroke="#d8aca2" stroke-width="2"/></svg>
<svg style="left:0;top:0" width="1" height="1"><path d="M158.5,648.25 L161.5,648.25 L166,644.75 L166,654.75 L161.5,651.25 L158.5,651.25 Z" fill="none" stroke="#a8a8a8" stroke-width="1.1"/><path d="M168.5,647.25 L168.5,652.25" stroke="#a8a8a8" stroke-width="1"/></svg>
<div style="position:absolute;left:175.00px;top:644.09px;font-size:12px;line-height:12px;color:#ee7070;font-weight:normal;white-space:nowrap;">2 Корабли</div>
<div style="position:absolute;left:418px;top:639.5px;width:20px;height:19.5px;background:linear-gradient(180deg,#3c3c3c,#2e2e2e);border:1px solid #161616;box-sizing:border-box;box-shadow:0 2px 0 #222;"></div>
<div style="position:absolute;left:424.25px;top:643.72px;font-size:11.5px;line-height:11.5px;color:#c85a56;font-weight:normal;white-space:nowrap;transform:scaleX(0.7829);transform-origin:0 0;">M</div>
<div style="position:absolute;left:437.5px;top:639.5px;width:20px;height:19.5px;background:linear-gradient(180deg,#3c3c3c,#2e2e2e);border:1px solid #161616;box-sizing:border-box;box-shadow:0 2px 0 #222;"></div>
<div style="position:absolute;left:444.25px;top:643.72px;font-size:11.5px;line-height:11.5px;color:#c8c05c;font-weight:normal;white-space:nowrap;transform:scaleX(0.8474);transform-origin:0 0;">S</div>
<div style="position:absolute;left:397.40px;top:645.71px;font-size:9.5px;line-height:9.5px;color:#8c8c8c;font-weight:normal;white-space:nowrap;">-inf</div>
<div style="position:absolute;left:112.03px;top:644.27px;font-size:11.5px;line-height:11.5px;color:#ffe8e8;font-weight:normal;white-space:nowrap;">11</div>
<div style="position:absolute;left:130px;top:536px;width:259px;height:1px;background:#2a2a2a;"></div>
<div style="position:absolute;left:130px;top:561px;width:259px;height:1px;background:#2a2a2a;"></div>
<div style="position:absolute;left:130px;top:586px;width:259px;height:1px;background:#2a2a2a;"></div>
<div style="position:absolute;left:130px;top:611px;width:259px;height:1px;background:#2a2a2a;"></div>
<div style="position:absolute;left:130px;top:636px;width:259px;height:1px;background:#2a2a2a;"></div>
<div style="position:absolute;left:670px;top:320px;width:769px;height:151px;background:#262a9b;"></div>
<div style="position:absolute;left:670px;top:319px;width:769px;height:1px;background:#2c2c2c;"></div>
<div style="position:absolute;left:670px;top:471px;width:769px;height:2px;background:#202020;"></div>
<svg style="left:0;top:0" width="1" height="1"><polygon points="670,464 670,471 677,471" fill="#8a8ad8"/></svg>
<svg style="left:0;top:0" width="1" height="1">
<circle cx="679" cy="312" r="5.3" stroke="#8a8e90" stroke-width="1.2" fill="none"/><path d="M679,306.5 L679,311.5" stroke="#a0b8c0" stroke-width="1.3"/>
<rect x="689" y="306" width="13" height="12" fill="#6e6e6e"/><path d="M693,311 L693,309.5 Q693,307.8 695.5,307.8 Q698,307.8 698,309.5 L698,311" stroke="#454545" stroke-width="1.2" fill="none"/><rect x="692" y="311" width="7" height="5" fill="#454545"/>
<rect x="704" y="306" width="13" height="12" fill="#6e6e6e"/>
<rect x="719" y="306" width="13" height="12" fill="#6e6e6e"/>
<rect x="734" y="306" width="13" height="12" fill="#6e6e6e"/><path d="M736,315 L740.5,310.5 L745,313.5" stroke="#454545" stroke-width="1.3" fill="none"/><rect x="735" y="314" width="2.5" height="2.5" fill="#454545"/><rect x="743.5" y="312" width="2.5" height="2.5" fill="#454545"/>
</svg>
<div style="position:absolute;left:705.92px;top:307.19px;font-size:11px;line-height:11px;color:#4a4a4a;font-weight:normal;white-space:nowrap;">M</div>
<div style="position:absolute;left:720.00px;top:307.61px;font-size:10.5px;line-height:10.5px;color:#4a4a4a;font-weight:normal;white-space:nowrap;transform:scaleX(0.8198);transform-origin:0 0;">FX</div>
<div style="position:absolute;left:751.00px;top:307.19px;font-size:11px;line-height:11px;color:#8a9098;font-weight:normal;white-space:nowrap;transform:scaleX(0.9405);transform-origin:0 0;">VID2.mp4</div>
<div style="position:absolute;left:710.00px;top:377.74px;font-size:27px;line-height:27px;color:#ffffff;font-weight:normal;white-space:nowrap;transform:scaleX(0.9777);transform-origin:0 0;-webkit-text-stroke:0.5px #ffffff;">ВИДЕО БЕЗ ЗВУКА</div>
<div style="position:absolute;left:1130px;top:480px;width:309px;height:1px;background:#6a6a6a;"></div>
<div style="position:absolute;left:1130px;top:490px;width:309px;height:1px;background:#6a6a6a;"></div>
<div style="position:absolute;left:1129px;top:500px;width:310px;height:1.5px;background:#4a52b0;"></div>
<div style="position:absolute;left:1129px;top:501.5px;width:310px;height:1.5px;background:#262626;"></div>
<div style="position:absolute;left:675px;top:542px;width:676px;height:1px;background:#6e6e6e;"></div>
<div style="position:absolute;left:675px;top:552px;width:676px;height:1px;background:#6e6e6e;"></div>
<div style="position:absolute;left:675px;top:562px;width:676.5px;height:21.5px;background:#cad58c;"></div>
<div style="position:absolute;left:675px;top:583.5px;width:676.5px;height:2px;background:#262626;"></div>
<div style="position:absolute;left:675px;top:567px;width:676.5px;height:1.2px;background:#3a3a2a;"></div>
<div style="position:absolute;left:675px;top:577px;width:676.5px;height:1.2px;background:#3a3a2a;"></div>
<svg style="left:0;top:0" width="1" height="1">
<path d="M675,583.5 C693.0,583.5 697.0,562 715,562 L675,562 Z" fill="#8a8040" opacity="0.4"/>
<path d="M675,583.0 C693.0,583.0 697.0,562.5 715,562.5" stroke="#8a2018" stroke-width="1.1" fill="none"/>
<path d="M715,562 L715,583.5" stroke="#e8f0c0" stroke-width="0.8"/>
<path d="M1292.5,562 C1319.05,562 1324.95,583.5 1351.5,583.5 L1351.5,562 Z" fill="#8a8040" opacity="0.4"/>
<path d="M1292.5,562.5 C1319.05,562.5 1324.95,583.0 1351.5,583.0" stroke="#8a2018" stroke-width="1.1" fill="none"/>
<path d="M1292.5,562 L1292.5,583.5" stroke="#e8f0c0" stroke-width="0.8"/>
</svg>
<div style="position:absolute;left:765px;top:587px;width:447.5px;height:21.5px;background:#cad58c;"></div>
<div style="position:absolute;left:765px;top:608.5px;width:447.5px;height:2px;background:#262626;"></div>
<div style="position:absolute;left:765px;top:592px;width:447.5px;height:1.2px;background:#3a3a2a;"></div>
<div style="position:absolute;left:765px;top:602px;width:447.5px;height:1.2px;background:#3a3a2a;"></div>
<svg style="left:0;top:0" width="1" height="1">
<path d="M765,608.5 C768.6,608.5 769.4,587 773,587 L765,587 Z" fill="#8a8040" opacity="0.4"/>
<path d="M765,608.0 C768.6,608.0 769.4,587.5 773,587.5" stroke="#8a2018" stroke-width="1.1" fill="none"/>
<path d="M773,587 L773,608.5" stroke="#e8f0c0" stroke-width="0.8"/>
<path d="M1146.5,587 C1176.2,587 1182.8,608.5 1212.5,608.5 L1212.5,587 Z" fill="#8a8040" opacity="0.4"/>
<path d="M1146.5,587.5 C1176.2,587.5 1182.8,608.0 1212.5,608.0" stroke="#8a2018" stroke-width="1.1" fill="none"/>
<path d="M1146.5,587 L1146.5,608.5" stroke="#e8f0c0" stroke-width="0.8"/>
</svg>
<div style="position:absolute;left:675px;top:612px;width:625.5px;height:21.5px;background:#cad58c;"></div>
<div style="position:absolute;left:675px;top:633.5px;width:625.5px;height:2px;background:#262626;"></div>
<div style="position:absolute;left:675px;top:617px;width:625.5px;height:1.2px;background:#3a3a2a;"></div>
<div style="position:absolute;left:675px;top:627px;width:625.5px;height:1.2px;background:#3a3a2a;"></div>
<svg style="left:0;top:0" width="1" height="1">
<path d="M675,633.5 C693.0,633.5 697.0,612 715,612 L675,612 Z" fill="#8a8040" opacity="0.4"/>
<path d="M675,633.0 C693.0,633.0 697.0,612.5 715,612.5" stroke="#8a2018" stroke-width="1.1" fill="none"/>
<path d="M715,612 L715,633.5" stroke="#e8f0c0" stroke-width="0.8"/>
<path d="M1257.5,612 C1276.85,612 1281.15,633.5 1300.5,633.5 L1300.5,612 Z" fill="#8a8040" opacity="0.4"/>
<path d="M1257.5,612.5 C1276.85,612.5 1281.15,633.0 1300.5,633.0" stroke="#8a2018" stroke-width="1.1" fill="none"/>
<path d="M1257.5,612 L1257.5,633.5" stroke="#e8f0c0" stroke-width="0.8"/>
</svg>
<svg style="left:0;top:0" width="1" height="1">
<polygon points="776,566.7 777,566.9 778,566.3 779,567.0 780,566.4 781,566.6 782,567.0 783,566.4 784,567.1 785,566.5 786,567.0 787,567.0 788,566.5 789,566.0 790,566.9 791,566.8 792,566.3 793,565.9 794,566.3 795,566.6 796,565.8 797,567.0 798,566.0 799,566.7 800,566.9 801,566.9 802,566.7 803,566.0 804,566.9 805,566.3 806,566.3 807,566.6 808,566.4 809,567.0 810,567.0 811,566.8 812,566.2 813,566.5 814,566.7 815,566.3 816,566.5 817,566.7 818,566.1 819,566.2 820,566.8 821,566.4 822,566.4 823,566.0 824,566.2 825,566.7 826,565.8 827,566.9 828,566.6 829,566.1 830,566.9 831,566.5 832,567.0 833,566.2 834,566.1 835,566.4 836,566.0 837,566.7 838,566.2 839,566.3 840,566.3 841,566.5 842,566.0 843,565.9 844,566.5 845,566.2 846,567.0 847,566.2 848,566.3 849,565.8 850,566.0 851,566.7 852,566.6 853,566.2 854,567.1 855,566.5 856,566.9 856,568.7 855,568.6 854,569.5 853,568.7 852,568.8 851,569.0 850,569.6 849,568.6 848,569.1 847,569.2 846,569.6 845,569.6 844,569.6 843,568.9 842,569.0 841,569.0 840,569.6 839,569.7 838,568.7 837,568.7 836,568.8 835,568.8 834,569.1 833,569.3 832,568.8 831,568.5 830,569.0 829,569.0 828,569.2 827,569.7 826,569.4 825,569.2 824,569.3 823,569.4 822,568.6 821,569.7 820,569.5 819,569.6 818,569.5 817,569.0 816,569.0 815,568.6 814,569.3 813,568.6 812,568.6 811,568.8 810,568.7 809,568.9 808,568.6 807,568.5 806,568.7 805,568.6 804,569.0 803,568.5 802,569.6 801,569.3 800,568.7 799,568.8 798,569.0 797,569.0 796,568.7 795,569.6 794,569.8 793,569.1 792,569.1 791,568.6 790,568.6 789,568.9 788,568.8 787,569.6 786,568.7 785,568.5 784,569.7 783,569.2 782,568.7 781,569.2 780,568.5 779,569.2 778,569.8 777,569.6 776,569.4" fill="#3a3a2a"/>
<polygon points="784,576.8 785,576.6 786,576.9 787,576.1 788,576.4 789,576.1 790,576.7 791,576.8 792,576.0 793,575.8 794,576.0 795,576.1 796,576.0 797,576.1 798,576.8 799,576.4 800,576.6 801,577.1 802,577.1 803,576.7 804,576.8 805,576.2 806,575.9 807,576.5 808,575.9 809,575.8 810,575.9 811,576.6 812,576.8 813,576.8 814,576.8 815,576.8 816,576.3 817,575.9 818,576.0 819,576.5 820,576.3 821,576.1 822,577.0 823,576.2 824,575.9 825,576.1 826,576.1 827,576.5 828,576.9 829,576.1 830,576.7 831,576.1 832,575.8 833,576.6 834,576.6 835,575.9 836,576.2 837,576.9 838,576.9 839,576.9 840,575.9 841,576.1 842,576.9 843,576.0 844,575.8 845,576.2 846,576.6 847,576.4 848,576.9 849,577.1 850,575.8 851,576.3 852,576.4 853,575.9 854,576.5 855,576.0 856,576.0 856,578.8 855,578.8 854,578.9 853,578.8 852,579.3 851,578.8 850,579.0 849,578.7 848,579.7 847,579.0 846,579.1 845,579.3 844,579.7 843,579.0 842,579.7 841,579.2 840,579.2 839,579.2 838,578.5 837,579.1 836,578.7 835,578.5 834,579.5 833,578.7 832,579.1 831,579.4 830,579.2 829,578.9 828,579.2 827,579.2 826,579.5 825,578.6 824,579.2 823,578.8 822,578.9 821,579.5 820,579.2 819,579.2 818,579.5 817,579.7 816,579.1 815,579.3 814,579.2 813,579.2 812,579.4 811,579.1 810,579.2 809,579.1 808,579.7 807,579.4 806,579.6 805,579.7 804,578.8 803,579.2 802,579.7 801,579.6 800,578.7 799,578.7 798,579.1 797,578.6 796,578.8 795,578.6 794,579.4 793,579.5 792,579.7 791,578.7 790,579.4 789,579.4 788,578.7 787,579.6 786,579.8 785,578.8 784,579.7" fill="#3a3a2a"/>
<polygon points="789,591.3 790,591.2 791,590.4 792,590.7 793,591.7 794,591.3 795,591.2 796,591.4 797,591.7 798,591.5 799,590.8 800,591.9 801,591.1 802,591.3 803,591.9 804,591.4 805,591.0 806,591.2 807,591.9 807,595.2 806,594.9 805,595.2 804,593.8 803,594.1 802,593.7 801,594.9 800,594.1 799,593.8 798,594.3 797,595.1 796,594.9 795,594.0 794,593.9 793,595.1 792,594.5 791,594.7 790,593.8 789,593.7" fill="#3a3a2a"/>
<polygon points="789,600.9 790,601.3 791,601.8 792,600.5 793,601.0 794,600.7 795,601.8 796,600.6 797,601.9 798,600.6 799,601.3 800,601.4 801,601.1 802,600.5 803,601.5 804,601.8 805,601.1 806,601.6 807,601.8 807,603.9 806,603.7 805,604.0 804,604.1 803,604.1 802,604.8 801,604.1 800,604.4 799,603.9 798,604.2 797,603.7 796,604.0 795,603.7 794,604.8 793,604.5 792,603.9 791,604.4 790,605.1 789,603.8" fill="#3a3a2a"/>
<polygon points="805,615.7 806,616.2 807,616.1 808,615.7 809,616.2 810,616.1 811,615.9 812,615.5 813,616.3 814,615.7 815,615.8 816,615.9 817,616.2 818,616.3 819,616.6 820,616.5 821,616.6 822,615.8 823,616.4 824,616.5 825,616.6 826,615.7 827,615.7 828,615.9 829,616.3 830,616.4 831,616.3 832,616.1 833,616.5 834,616.1 835,616.4 836,615.5 837,615.5 838,616.0 838,618.2 837,619.1 836,618.3 835,618.3 834,617.9 833,618.4 832,618.5 831,618.5 830,618.2 829,618.5 828,617.9 827,618.2 826,618.0 825,618.4 824,618.0 823,618.0 822,618.3 821,618.2 820,618.6 819,618.5 818,618.8 817,618.7 816,618.8 815,619.0 814,618.4 813,618.3 812,619.1 811,618.1 810,618.8 809,618.7 808,618.0 807,618.9 806,619.0 805,618.7" fill="#3a3a2a"/>
<polygon points="807,626.0 808,625.9 809,626.7 810,626.3 811,626.3 812,625.9 813,625.9 814,625.9 815,626.2 816,625.8 817,626.1 818,626.1 819,626.6 820,626.8 821,626.7 822,626.4 823,626.7 824,625.9 825,626.2 826,626.1 827,626.1 828,626.1 829,626.3 830,626.9 831,625.9 832,626.0 833,626.3 834,626.2 835,626.1 836,626.8 837,626.0 838,626.6 839,626.8 840,626.6 841,626.0 842,626.6 843,626.0 844,625.7 845,626.3 845,628.6 844,628.7 843,628.9 842,629.0 841,628.9 840,628.9 839,628.2 838,628.3 837,628.4 836,629.0 835,628.5 834,628.8 833,628.1 832,628.2 831,628.4 830,628.9 829,628.9 828,628.9 827,628.5 826,628.7 825,628.7 824,628.7 823,628.3 822,629.2 821,628.4 820,629.3 819,629.2 818,628.2 817,628.7 816,629.1 815,629.3 814,628.7 813,628.4 812,628.4 811,629.2 810,628.4 809,628.8 808,628.3 807,628.7" fill="#3a3a2a"/>
<polygon points="776,540.8 777,541.6 778,541.0 779,541.3 780,540.9 781,541.1 782,541.5 783,540.9 784,541.3 785,541.8 786,541.8 787,541.3 788,541.3 789,541.5 790,541.6 791,541.4 792,541.5 793,541.0 794,541.8 795,541.0 796,541.0 797,541.7 798,540.9 799,541.1 800,540.9 801,541.5 802,541.4 803,541.4 804,540.8 805,541.2 806,541.4 807,541.4 808,541.5 809,541.7 810,541.7 811,541.0 812,541.5 813,540.9 814,541.5 815,541.5 816,541.3 817,541.6 818,541.4 819,540.8 820,540.9 821,541.0 822,541.2 823,540.9 824,540.9 825,541.2 826,541.1 827,541.7 828,541.1 829,541.3 830,541.0 831,541.1 832,541.5 833,541.7 834,540.9 835,541.7 836,541.3 837,541.4 838,541.5 839,541.1 840,540.8 841,541.5 842,541.1 843,541.5 844,541.2 845,541.4 846,541.6 847,541.6 848,541.6 849,540.9 850,541.3 851,541.6 852,540.9 853,540.8 854,541.3 855,541.6 856,541.6 856,542.9 855,543.2 854,542.9 853,543.1 852,543.1 851,543.4 850,543.7 849,543.6 848,543.2 847,543.2 846,543.3 845,543.2 844,543.2 843,542.9 842,543.1 841,543.8 840,542.9 839,543.3 838,543.4 837,543.7 836,543.0 835,543.1 834,543.1 833,543.2 832,543.3 831,543.8 830,543.7 829,543.7 828,542.8 827,542.9 826,543.5 825,543.7 824,543.3 823,543.4 822,542.8 821,543.2 820,543.7 819,543.6 818,543.7 817,543.8 816,543.1 815,542.9 814,543.0 813,543.3 812,543.5 811,543.7 810,543.5 809,543.5 808,543.6 807,543.3 806,543.4 805,542.9 804,543.6 803,543.1 802,543.7 801,543.5 800,543.1 799,542.9 798,543.1 797,543.4 796,543.5 795,542.9 794,542.9 793,543.3 792,543.4 791,543.2 790,543.0 789,543.4 788,542.8 787,543.1 786,543.3 785,543.8 784,543.5 783,543.7 782,543.3 781,543.1 780,543.1 779,543.8 778,543.5 777,543.1 776,542.8" fill="#7a7a7a"/>
<polygon points="784,551.3 785,551.1 786,551.4 787,551.5 788,551.1 789,550.9 790,551.6 791,551.7 792,551.4 793,551.4 794,551.1 795,551.6 796,551.0 797,551.1 798,551.3 799,551.6 800,550.8 801,551.5 802,551.0 803,551.5 804,551.6 805,551.0 806,551.5 807,550.8 808,551.3 809,551.6 810,551.6 811,551.4 812,551.1 813,550.8 814,551.6 815,551.4 816,551.6 817,550.8 818,551.6 819,551.7 820,551.7 821,551.4 822,550.9 823,550.9 824,551.1 825,550.8 826,550.9 827,551.5 828,551.6 829,550.9 830,551.0 831,551.7 832,551.1 833,551.4 834,551.4 835,551.5 836,551.6 837,551.8 838,551.5 839,551.4 840,550.8 841,551.7 842,550.8 843,551.6 844,551.4 845,551.0 846,551.0 847,551.4 848,551.7 849,551.3 850,551.4 851,550.9 852,551.6 853,551.4 854,550.9 855,551.7 856,551.4 856,553.6 855,553.6 854,552.9 853,552.9 852,552.9 851,553.7 850,553.1 849,553.6 848,553.7 847,553.2 846,553.1 845,553.8 844,553.4 843,553.1 842,553.5 841,553.1 840,553.1 839,552.8 838,553.6 837,553.7 836,553.4 835,553.7 834,552.8 833,553.1 832,553.3 831,553.8 830,553.8 829,553.2 828,553.1 827,553.2 826,553.3 825,553.7 824,553.0 823,553.6 822,553.5 821,553.6 820,553.6 819,553.4 818,553.1 817,553.1 816,553.2 815,553.6 814,552.9 813,553.0 812,553.6 811,553.1 810,552.9 809,552.9 808,553.4 807,553.1 806,553.8 805,553.7 804,553.8 803,553.1 802,552.9 801,552.9 800,553.3 799,553.5 798,553.3 797,553.1 796,553.2 795,553.4 794,553.5 793,553.6 792,553.7 791,553.5 790,552.9 789,553.6 788,553.1 787,553.4 786,553.2 785,553.5 784,553.0" fill="#7a7a7a"/>
</svg>
<div style="position:absolute;left:469px;top:244px;width:1px;height:418px;background:transparent;opacity:0.85;background-image:repeating-linear-gradient(180deg,#1c1c1c 0 1px,transparent 1px 2px);"></div>
<div style="position:absolute;left:569px;top:244px;width:1px;height:418px;background:transparent;opacity:0.85;background-image:repeating-linear-gradient(180deg,#1c1c1c 0 1px,transparent 1px 2px);"></div>
<div style="position:absolute;left:669px;top:244px;width:1px;height:418px;background:transparent;opacity:0.85;background-image:repeating-linear-gradient(180deg,#1c1c1c 0 1px,transparent 1px 2px);"></div>
<div style="position:absolute;left:770px;top:244px;width:1px;height:418px;background:transparent;opacity:0.85;background-image:repeating-linear-gradient(180deg,#1c1c1c 0 1px,transparent 1px 2px);"></div>
<div style="position:absolute;left:870px;top:244px;width:1px;height:418px;background:transparent;opacity:0.85;background-image:repeating-linear-gradient(180deg,#1c1c1c 0 1px,transparent 1px 2px);"></div>
<div style="position:absolute;left:971px;top:244px;width:1px;height:418px;background:transparent;opacity:0.85;background-image:repeating-linear-gradient(180deg,#1c1c1c 0 1px,transparent 1px 2px);"></div>
<div style="position:absolute;left:1071px;top:244px;width:1px;height:418px;background:transparent;opacity:0.85;background-image:repeating-linear-gradient(180deg,#1c1c1c 0 1px,transparent 1px 2px);"></div>
<div style="position:absolute;left:1171px;top:244px;width:1px;height:418px;background:transparent;opacity:0.85;background-image:repeating-linear-gradient(180deg,#1c1c1c 0 1px,transparent 1px 2px);"></div>
<div style="position:absolute;left:1271px;top:244px;width:1px;height:418px;background:transparent;opacity:0.85;background-image:repeating-linear-gradient(180deg,#1c1c1c 0 1px,transparent 1px 2px);"></div>
<div style="position:absolute;left:1371px;top:244px;width:1px;height:418px;background:transparent;opacity:0.85;background-image:repeating-linear-gradient(180deg,#1c1c1c 0 1px,transparent 1px 2px);"></div>
<div style="position:absolute;left:663px;top:205px;width:1.3px;height:457px;background:#b40a0a;"></div>
<div style="position:absolute;left:1292px;top:205px;width:1.3px;height:457px;background:#b40a0a;"></div>
<svg style="left:0;top:0" width="1" height="1">
<polygon points="666.5,192 672.5,192 675.5,195 675.5,202 672.5,205 666.5,205 663.5,202 663.5,195" fill="#b00c0c" stroke="#e05050" stroke-width="0.6"/>
<polygon points="1295.5,192 1301.5,192 1304.5,195 1304.5,202 1301.5,205 1295.5,205 1292.5,202 1292.5,195" fill="#b00c0c" stroke="#e05050" stroke-width="0.6"/>
</svg>
<div style="position:absolute;left:666.86px;top:194.46px;font-size:9.5px;line-height:9.5px;color:#ffffff;font-weight:bold;white-space:nowrap;">1</div>
<div style="position:absolute;left:1295.86px;top:194.46px;font-size:9.5px;line-height:9.5px;color:#ffffff;font-weight:bold;white-space:nowrap;">2</div>
<div style="position:absolute;left:786px;top:227px;width:1.4px;height:245px;background:#ff14ff;"></div>
<div style="position:absolute;left:786px;top:474px;width:1.4px;height:188px;background:#ff14ff;"></div>
<svg style="left:0;top:0" width="1" height="1"><polygon points="778,219.5 795,219.5 786.7,228" fill="#b01cb4" stroke="#8c9294" stroke-width="0.8"/><rect x="787" y="307.5" width="4" height="2.5" fill="#ff14ff"/><rect x="787" y="469" width="4" height="2.5" fill="#ff14ff"/></svg>
<div style="position:absolute;left:477.00px;top:512.45px;font-size:29px;line-height:29px;color:#ffffff;font-weight:normal;white-space:nowrap;transform:scaleX(0.9561);transform-origin:0 0;-webkit-text-stroke:0.5px #ffffff;">Начало озвучки НЕ СРАЗУ</div>
<svg style="left:0;top:0" width="1" height="1"><g stroke="#ffffff" stroke-width="3" fill="none" stroke-linecap="round" stroke-linejoin="round">
<path d="M611,543 C620,548 640,560 667,579"/>
<path d="M650.5,563.7 C655,564 660,570 667,579 M643,571.5 C650,574 660,577 667,579"/>
<path d="M587,546 C598,562 610,577 637,589 C660,598 700,602 750,600"/>
<path d="M731,593 C740,595 748,597 750,600 C746,602 742,603 741,604"/>
<path d="M555,543 C565,556 585,575 609,595 C625,608 640,617 668,624"/>
<path d="M646,607.3 C652,612 658,618 664,622.6 M636,622.6 C648,622 658,623 668,624"/>
</g></svg>
</body></html>
